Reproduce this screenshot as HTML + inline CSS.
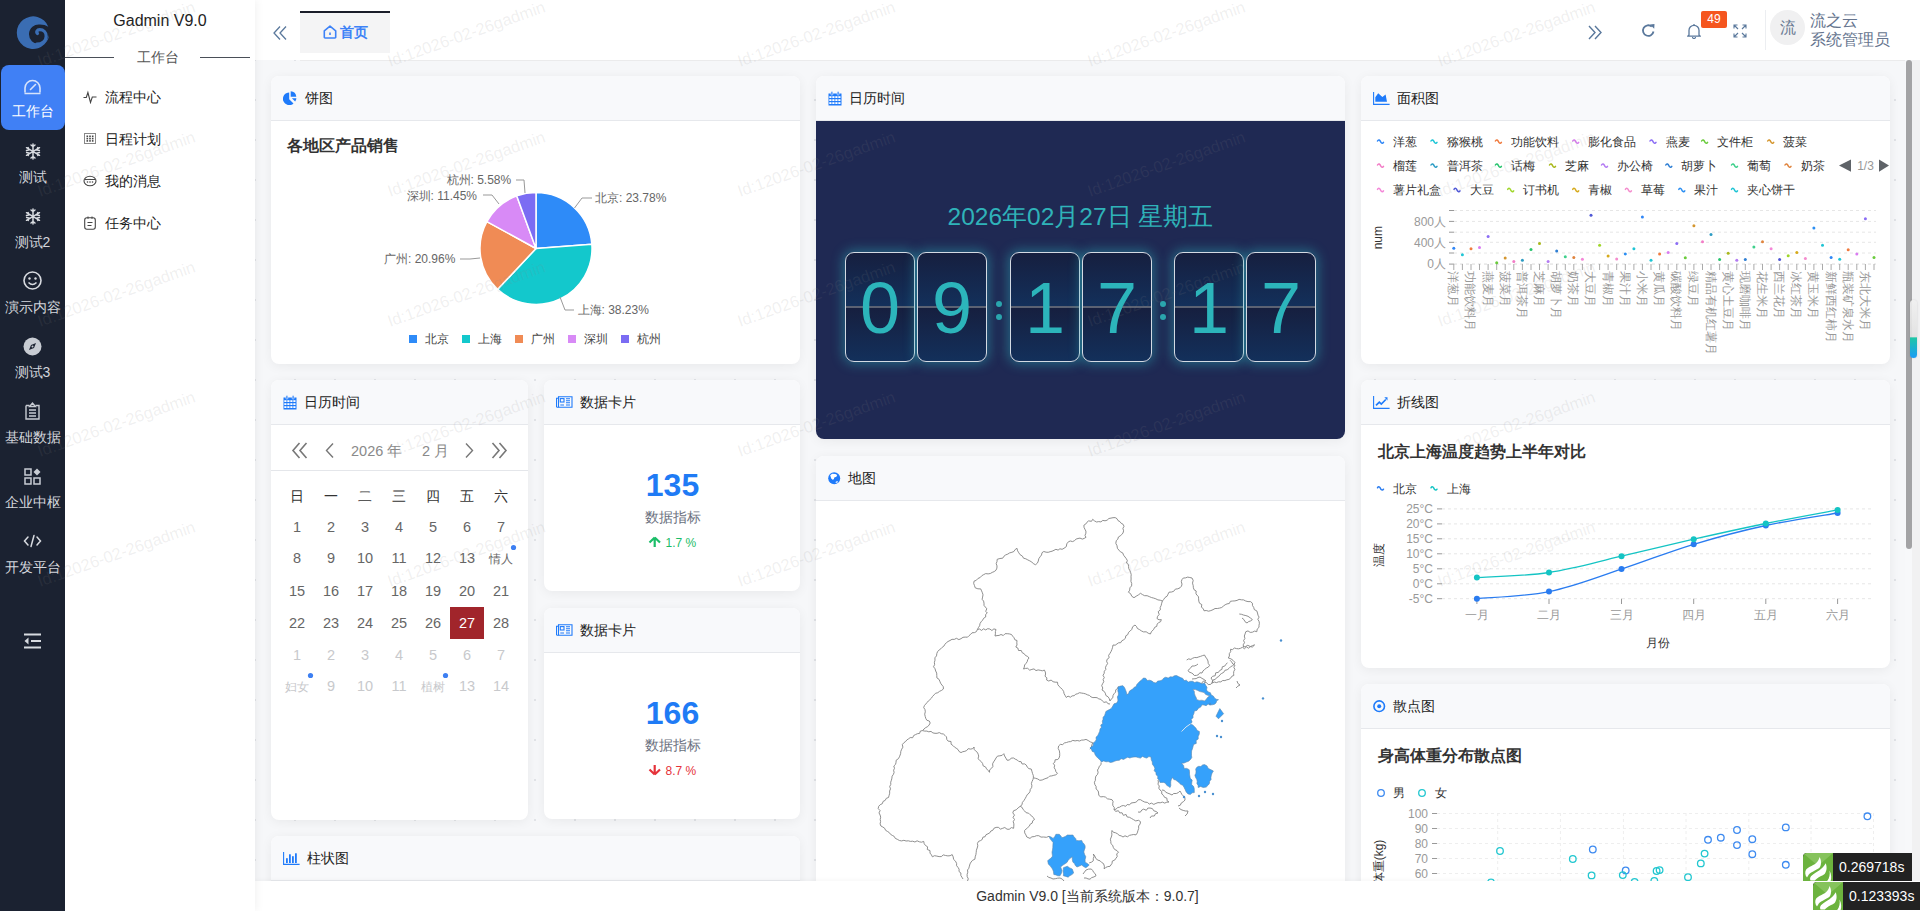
<!DOCTYPE html>
<html><head><meta charset="utf-8">
<style>
*{box-sizing:border-box;margin:0;padding:0}
html,body{width:1920px;height:911px;overflow:hidden;font-family:"Liberation Sans",sans-serif;background:#fff;color:#333}
.abs{position:absolute}
#side{left:0;top:0;width:65px;height:911px;background:#1b2231}
#sub{left:65px;top:0;width:190px;height:911px;background:#fff;box-shadow:2px 0 8px rgba(0,0,0,0.05);z-index:2}
#hdr{left:255px;top:0;width:1665px;height:60px;background:#fff;z-index:1}
#content{left:255px;top:60px;width:1665px;height:821px;background-color:#f6f7f9;
 background-image:radial-gradient(circle at 1px 1px,#e1e3e7 1px,transparent 1.2px);background-size:40px 40px;background-position:-1px -1px}
#foot{left:255px;top:881px;width:1665px;height:30px;background:#fff;font-size:14px;color:#333;text-align:center;line-height:30px;box-shadow:0 -1px 4px rgba(0,0,0,0.04)}
.card{position:absolute;background:#fff;border-radius:8px;box-shadow:0 2px 12px rgba(0,0,0,0.06);overflow:hidden}
.ch{position:absolute;left:0;top:0;right:0;height:45px;background:#f8f9fb;border-bottom:1px solid #e6e8ec;font-size:14px;color:#222;line-height:45px;padding-left:34px}
.ic{position:absolute}
.sl{left:0;width:65px;text-align:center;font-size:14px;line-height:16px;color:#d3d6dc;white-space:nowrap}
.mi{left:40px;font-size:14px;line-height:16px;color:#222;white-space:nowrap}
.fl{position:absolute;top:176px;width:70px;height:110px;border:1px solid #d3dae3;border-radius:9px;background:linear-gradient(180deg,#161f3f 0%,#13305b 49.5%,#5b6273 49.5%,#5b6273 50.5%,#161f3f 50.5%,#13305b 100%);box-shadow:0 0 12px 2px rgba(45,180,190,0.45);text-align:center;overflow:hidden}.fl span{display:block;font-size:72px;line-height:110px;color:#2cb5bb}
</style></head><body>
<div id="side" class="abs">
<svg class="abs" style="left:15px;top:16px" width="34" height="34" viewBox="0 0 34 34"><path fill="#3a6db3" fill-rule="evenodd" d="M33.3 10.8A16.3 16.3 0 1 0 33.5 22 L33.5 17 A9.8 9.8 0 1 1 25 8.5 Q30 8.5 33.3 10.8z"/><path d="M22.5 17.5c-1.6-1.4-.4-3.8 2.2-3.8 4 0 6.5 3 6.5 6.5 0 4.5-4 8-9.5 8" fill="none" stroke="#3a6db3" stroke-width="3.2" stroke-linecap="round"/></svg>
<div class="abs" style="left:1px;top:65px;width:64px;height:65px;background:#4080f5;border-radius:8px"></div>
<svg class="abs" style="left:23px;top:78px" width="19" height="17" viewBox="0 0 19 17"><path d="M2 14.5V10a7.5 7.5 0 0 1 15 0v4.5M1.5 15.5h16" fill="none" stroke="#d7e3fb" stroke-width="1.6"/><path d="M7.5 11.5l5-5" stroke="#d7e3fb" stroke-width="1.6" stroke-linecap="round"/></svg>
<div class="abs sl" style="top:103px;color:#fff">工作台</div>
<svg class="abs" style="left:25px;top:143px" width="16" height="17" viewBox="0 0 16 17"><g stroke="#d8dbe0" stroke-width="1.5" fill="none" stroke-linecap="round"><path d="M8 1v15M1.5 4.7l13 7.6M1.5 12.3l13-7.6M6 2l2 1.6L10 2M6 15l2-1.6 2 1.6M1.5 7.5l2.4-.6-.8-2.3M14.5 9.5l-2.4.6.8 2.3M1.6 9.6l2.4.5-.8 2.3M14.4 7.4l-2.4-.5.8-2.3"/></g></svg>
<div class="abs sl" style="top:169px">测试</div>
<svg class="abs" style="left:25px;top:208px" width="16" height="17" viewBox="0 0 16 17"><g stroke="#d8dbe0" stroke-width="1.5" fill="none" stroke-linecap="round"><path d="M8 1v15M1.5 4.7l13 7.6M1.5 12.3l13-7.6M6 2l2 1.6L10 2M6 15l2-1.6 2 1.6M1.5 7.5l2.4-.6-.8-2.3M14.5 9.5l-2.4.6.8 2.3M1.6 9.6l2.4.5-.8 2.3M14.4 7.4l-2.4-.5.8-2.3"/></g></svg>
<div class="abs sl" style="top:234px">测试2</div>
<svg class="abs" style="left:23px;top:271px" width="19" height="19" viewBox="0 0 19 19"><circle cx="9.5" cy="9.5" r="8.5" fill="none" stroke="#d8dbe0" stroke-width="1.6"/><circle cx="6.5" cy="7.5" r="1.2" fill="#d8dbe0"/><circle cx="12.5" cy="7.5" r="1.2" fill="#d8dbe0"/><path d="M5.5 11.5q4 4 8 0" fill="none" stroke="#d8dbe0" stroke-width="1.5"/></svg>
<div class="abs sl" style="top:299px">演示内容</div>
<svg class="abs" style="left:23px;top:337px" width="19" height="19" viewBox="0 0 19 19"><circle cx="9.5" cy="9.5" r="9" fill="#c8ccd3"/><path d="M13 6l-5 2-2 5 5-2z" fill="#1c2332"/><circle cx="9.5" cy="9.5" r="1" fill="#c8ccd3"/></svg>
<div class="abs sl" style="top:364px">测试3</div>
<svg class="abs" style="left:24px;top:402px" width="17" height="18" viewBox="0 0 17 18"><path d="M2 3.5h3.5M11.5 3.5H15v13.5H2V3.5" fill="none" stroke="#c8ccd3" stroke-width="1.4"/><path d="M5.5 4.5l3-3.5 3 3.5z" fill="none" stroke="#c8ccd3" stroke-width="1.3"/><path d="M5 8h7M5 11h7M5 14h7" stroke="#c8ccd3" stroke-width="1.3"/></svg>
<div class="abs sl" style="top:429px">基础数据</div>
<svg class="abs" style="left:24px;top:468px" width="17" height="17" viewBox="0 0 17 17"><g fill="none" stroke="#c8ccd3" stroke-width="1.5"><rect x="1" y="1" width="6" height="6"/><rect x="1" y="10" width="6" height="6"/><rect x="10" y="10" width="6" height="6"/></g><path d="M13 0.5l3.5 3.5-3.5 3.5-3.5-3.5z" fill="#c8ccd3"/></svg>
<div class="abs sl" style="top:494px">企业中枢</div>
<svg class="abs" style="left:23px;top:534px" width="19" height="14" viewBox="0 0 19 14"><g fill="none" stroke="#d8dbe0" stroke-width="1.5" stroke-linecap="round"><path d="M5 3L1.5 7 5 11M14 3l3.5 4-3.5 4M11 1.5L8 12.5"/></g></svg>
<div class="abs sl" style="top:559px">开发平台</div>
<svg class="abs" style="left:23px;top:633px" width="19" height="16" viewBox="0 0 19 16"><g stroke="#d8dbe0" stroke-width="2"><path d="M1 1.5h17M8 8h10M1 14.5h17"/></g><path d="M5.5 4.5L1.5 8l4 3.5z" fill="#d8dbe0"/></svg>
</div>
<div id="sub" class="abs">
<div class="abs" style="left:0;top:12px;width:190px;text-align:center;font-size:16px;line-height:18px;color:#222">Gadmin V9.0</div>
<div class="abs" style="left:0;top:57px;width:49px;height:1px;background:#4a4f58"></div>
<div class="abs" style="left:135px;top:57px;width:50px;height:1px;background:#4a4f58"></div>
<div class="abs" style="left:72px;top:49px;font-size:14px;line-height:16px;color:#555">工作台</div>
<svg class="abs" style="left:18px;top:90px" width="14" height="14" viewBox="0 0 14 14"><path d="M0.5 7.5h2.8l1.6-5 2.6 10 1.8-5.5h4.2" fill="none" stroke="#444" stroke-width="1.1"/></svg>
<div class="abs mi" style="top:89px">流程中心</div>
<svg class="abs" style="left:19px;top:133px" width="12" height="11" viewBox="0 0 12 11"><rect x=".5" y=".5" width="11" height="10" fill="none" stroke="#888" stroke-width="1"/><g fill="#444"><rect x="2.5" y="2.5" width="1.6" height="1.6"/><rect x="5.2" y="2.5" width="1.6" height="1.6"/><rect x="7.9" y="2.5" width="1.6" height="1.6"/><rect x="2.5" y="4.8" width="1.6" height="1.6"/><rect x="5.2" y="4.8" width="1.6" height="1.6"/><rect x="7.9" y="4.8" width="1.6" height="1.6"/><rect x="2.5" y="7.1" width="1.6" height="1.6"/><rect x="5.2" y="7.1" width="1.6" height="1.6"/><rect x="7.9" y="7.1" width="1.6" height="1.6"/></g></svg>
<div class="abs mi" style="top:131px">日程计划</div>
<svg class="abs" style="left:18px;top:175px" width="14" height="12" viewBox="0 0 14 12"><ellipse cx="7" cy="6" rx="6" ry="4.8" fill="none" stroke="#444" stroke-width="1.1"/><path d="M2 4.5h10" stroke="#444" stroke-width="1"/><circle cx="4.5" cy="7" r=".8" fill="#444"/><circle cx="7" cy="7" r=".8" fill="#444"/><circle cx="9.5" cy="7" r=".8" fill="#444"/></svg>
<div class="abs mi" style="top:173px">我的消息</div>
<svg class="abs" style="left:19px;top:216px" width="12" height="14" viewBox="0 0 12 14"><rect x=".7" y="1.7" width="10.6" height="11.6" rx="2.2" fill="none" stroke="#444" stroke-width="1.1"/><path d="M4 .5v2.4M8 .5v2.4M3.5 6.5h5M3.5 9.5h4" stroke="#444" stroke-width="1"/></svg>
<div class="abs mi" style="top:215px">任务中心</div>
</div>
<div id="hdr" class="abs">
<svg class="abs" style="left:18px;top:26px" width="14" height="14" viewBox="0 0 14 14"><path d="M7 0.5L1 7l6 6.5M13 0.5L7 7l6 6.5" fill="none" stroke="#5a789c" stroke-width="1.3"/></svg>
<div class="abs" style="left:45px;top:11px;width:90px;height:42px;background:#f4f4f5;border-top:2px solid #1a1d29"></div>
<svg class="abs" style="left:68px;top:25px" width="14" height="14" viewBox="0 0 14 14"><path d="M1.3 5.8L7 1.2l5.7 4.6v6.4a.8.8 0 0 1-.8.8H2.1a.8.8 0 0 1-.8-.8z" fill="none" stroke="#3d82f7" stroke-width="1.6" stroke-linejoin="round"/><path d="M7 7.5v2.5" stroke="#3d82f7" stroke-width="1.6"/></svg>
<div class="abs" style="left:85px;top:24px;font-size:14px;line-height:16px;color:#3d82f7;font-weight:bold">首页</div>
<svg class="abs" style="left:1333px;top:25px" width="14" height="15" viewBox="0 0 14 15"><path d="M1 1l6 6.5L1 14M7 1l6 6.5L7 14" fill="none" stroke="#5a789c" stroke-width="1.4"/></svg>
<svg class="abs" style="left:1386px;top:23px" width="15" height="15" viewBox="0 0 15 15"><path d="M12.5 8.5A5.3 5.3 0 1 1 10.8 3.6" fill="none" stroke="#5a789c" stroke-width="1.8"/><path d="M9 1.5l4.5-.5-.3 4.8z" fill="#5a789c"/></svg>
<svg class="abs" style="left:1432px;top:23px" width="14" height="16" viewBox="0 0 14 16"><path d="M2 12V7.3a5 5 0 0 1 10 0V12l1.3 1.2H0.7z" fill="none" stroke="#5a789c" stroke-width="1.3" stroke-linejoin="round"/><path d="M5.5 14a1.5 1.5 0 0 0 3 0M7 1v1.3" stroke="#5a789c" stroke-width="1.2" fill="none"/></svg>
<div class="abs" style="left:1446px;top:11px;width:26px;height:17px;background:#f5561f;border-radius:2px;color:#fff;font-size:12px;line-height:17px;text-align:center">49</div>
<svg class="abs" style="left:1478px;top:24px" width="14" height="14" viewBox="0 0 14 14"><g fill="none" stroke="#5a789c" stroke-width="1.1"><path d="M1 4.5V1h3.5M1 1l4 4M13 4.5V1H9.5M13 1L9 5M1 9.5V13h3.5M1 13l4-4M13 9.5V13H9.5M13 13L9 9"/></g></svg>
<div class="abs" style="left:1510px;top:10px;width:1px;height:40px;background:#eceef1"></div>
<div class="abs" style="left:1515px;top:10px;width:35px;height:35px;border-radius:50%;background:#f0f0f1;color:#6a7a93;font-size:16px;line-height:35px;text-align:center">流</div>
<div class="abs" style="left:1555px;top:11px;font-size:16px;line-height:19px;color:#65748e">流之云<br>系统管理员</div>
</div>
<div id="content" class="abs">
<div class="card" style="left:16px;top:16px;width:529px;height:288px"><div class="ch" style="padding-left:34px"><svg class="ic" style="left:12px;top:15px" width="15" height="14" viewBox="0 0 15 14"><path d="M6.2 1.5A6.3 6.3 0 1 0 10.5 12.4L6.2 8.2z" fill="#1f7bfa"/><path d="M7.7 0.3A6 6 0 0 1 13.3 5.7H7.7z" fill="#1f7bfa"/><path d="M8.9 7.2h4.5a6 6 0 0 1-1.3 3.3z" fill="#1f7bfa"/></svg>饼图</div><!--pie--></div>
<div class="card" style="left:16px;top:320px;width:257px;height:440px"><div class="ch" style="padding-left:33px"><svg class="ic" style="left:12px;top:15px" width="14" height="15" viewBox="0 0 14 15"><path d="M0.5 2.6h13v11.9h-13z" fill="#1f7bfa"/><rect x="3" y="0.6" width="1.8" height="3.6" rx=".9" fill="#1f7bfa" stroke="#f8f9fb" stroke-width=".6"/><rect x="9.2" y="0.6" width="1.8" height="3.6" rx=".9" fill="#1f7bfa" stroke="#f8f9fb" stroke-width=".6"/><g fill="#fff"><rect x="1.3" y="5.2" width="2.2" height="1.8"/><rect x="4.3" y="5.2" width="2.2" height="1.8"/><rect x="7.3" y="5.2" width="2.2" height="1.8"/><rect x="10.3" y="5.2" width="2.2" height="1.8"/><rect x="1.3" y="8.2" width="2.2" height="1.8"/><rect x="4.3" y="8.2" width="2.2" height="1.8"/><rect x="7.3" y="8.2" width="2.2" height="1.8"/><rect x="10.3" y="8.2" width="2.2" height="1.8"/><rect x="1.3" y="11.2" width="2.2" height="1.8"/><rect x="4.3" y="11.2" width="2.2" height="1.8"/><rect x="7.3" y="11.2" width="2.2" height="1.8"/><rect x="10.3" y="11.2" width="2.2" height="1.8"/></g></svg>日历时间</div><!--cal--></div>
<div class="card" style="left:289px;top:320px;width:256px;height:211px"><div class="ch" style="padding-left:36px"><svg class="ic" style="left:12px;top:16px" width="17" height="12" viewBox="0 0 17 12"><g fill="none" stroke="#1f7bfa" stroke-width="1.1"><path d="M2.5 0.8h13.5v10.4H1.3a.8.8 0 0 1-.8-.8V2.3h2z"/><path d="M2.5 0.8v10.4"/><rect x="4.3" y="2.6" width="3.7" height="3.4"/><path d="M10 2.8h4M10 4.8h4M10 6.8h4M4.3 9h3.7M10 9h4"/></g></svg>数据卡片</div><!--dc1--></div>
<div class="card" style="left:289px;top:548px;width:256px;height:211px"><div class="ch" style="padding-left:36px"><svg class="ic" style="left:12px;top:16px" width="17" height="12" viewBox="0 0 17 12"><g fill="none" stroke="#1f7bfa" stroke-width="1.1"><path d="M2.5 0.8h13.5v10.4H1.3a.8.8 0 0 1-.8-.8V2.3h2z"/><path d="M2.5 0.8v10.4"/><rect x="4.3" y="2.6" width="3.7" height="3.4"/><path d="M10 2.8h4M10 4.8h4M10 6.8h4M4.3 9h3.7M10 9h4"/></g></svg>数据卡片</div><!--dc2--></div>
<div class="card" style="left:16px;top:776px;width:529px;height:300px"><div class="ch" style="padding-left:36px"><svg class="ic" style="left:12px;top:16px" width="17" height="13" viewBox="0 0 17 13"><path d="M0.6 0v12.4h16" fill="none" stroke="#1f7bfa" stroke-width="1.1"/><g fill="#1f7bfa"><rect x="3" y="6.2" width="1.8" height="4.8"/><rect x="6" y="2.3" width="1.8" height="8.7"/><rect x="9" y="4.2" width="1.8" height="6.8"/><rect x="12" y="1.3" width="1.8" height="9.7"/></g></svg>柱状图</div></div>
<div class="card" style="left:561px;top:16px;width:529px;height:363px"><div class="ch" style="padding-left:33px"><svg class="ic" style="left:12px;top:15px" width="14" height="15" viewBox="0 0 14 15"><path d="M0.5 2.6h13v11.9h-13z" fill="#1f7bfa"/><rect x="3" y="0.6" width="1.8" height="3.6" rx=".9" fill="#1f7bfa" stroke="#f8f9fb" stroke-width=".6"/><rect x="9.2" y="0.6" width="1.8" height="3.6" rx=".9" fill="#1f7bfa" stroke="#f8f9fb" stroke-width=".6"/><g fill="#fff"><rect x="1.3" y="5.2" width="2.2" height="1.8"/><rect x="4.3" y="5.2" width="2.2" height="1.8"/><rect x="7.3" y="5.2" width="2.2" height="1.8"/><rect x="10.3" y="5.2" width="2.2" height="1.8"/><rect x="1.3" y="8.2" width="2.2" height="1.8"/><rect x="4.3" y="8.2" width="2.2" height="1.8"/><rect x="7.3" y="8.2" width="2.2" height="1.8"/><rect x="10.3" y="8.2" width="2.2" height="1.8"/><rect x="1.3" y="11.2" width="2.2" height="1.8"/><rect x="4.3" y="11.2" width="2.2" height="1.8"/><rect x="7.3" y="11.2" width="2.2" height="1.8"/><rect x="10.3" y="11.2" width="2.2" height="1.8"/></g></svg>日历时间</div><div class="abs" style="left:0;top:45px;width:529px;height:318px;background:#1f2953"></div><div class="abs" style="left:0;top:127px;width:529px;text-align:center;font-size:24.5px;line-height:28px;color:#2fb3b9">2026年02月27日 星期五</div><div class="fl" style="left:29px"><span>0</span></div><div class="fl" style="left:101px"><span>9</span></div><div class="fl" style="left:194px"><span>1</span></div><div class="fl" style="left:266px"><span>7</span></div><div class="fl" style="left:358px"><span>1</span></div><div class="fl" style="left:430px"><span>7</span></div><div class="abs" style="left:179.5px;top:225px;width:6px;height:6px;border-radius:50%;background:#2aa5ad"></div><div class="abs" style="left:179.5px;top:238px;width:6px;height:6px;border-radius:50%;background:#2aa5ad"></div><div class="abs" style="left:344px;top:225px;width:6px;height:6px;border-radius:50%;background:#2aa5ad"></div><div class="abs" style="left:344px;top:238px;width:6px;height:6px;border-radius:50%;background:#2aa5ad"></div></div>
<div class="card" style="left:561px;top:396px;width:529px;height:500px"><div class="ch" style="padding-left:32px"><svg class="ic" style="left:12px;top:16px" width="13" height="13" viewBox="0 0 13 13"><circle cx="6.2" cy="6.2" r="6" fill="#1f7bfa"/><path d="M2.2 3.3l2-1.6 3.2.3 1.8 1-.8 1.7-2.1.7-.5 1.8-1.2.6-1.4-1.4z" fill="#fff"/><path d="M7.2 10.2l1.6-1 1.2.1-.9 1.6z" fill="#fff"/></svg>地图</div><!--map--></div>
<div class="card" style="left:1106px;top:16px;width:529px;height:288px"><div class="ch" style="padding-left:36px"><svg class="ic" style="left:12px;top:16px" width="17" height="13" viewBox="0 0 17 13"><path d="M0.6 0v12.4h16" fill="none" stroke="#1f7bfa" stroke-width="1.1"/><path d="M2.3 5.2L5.2 1.2l4.2 3.8 3.2-2.5L14 9.8H2.3z" fill="#1f7bfa"/></svg>面积图</div><!--area--></div>
<div class="card" style="left:1106px;top:320px;width:529px;height:288px"><div class="ch" style="padding-left:36px"><svg class="ic" style="left:12px;top:16px" width="17" height="13" viewBox="0 0 17 13"><path d="M0.6 0v12.4h16" fill="none" stroke="#1f7bfa" stroke-width="1.1"/><path d="M3 9.3l3.3-3.2 2 2 4.5-4.6" fill="none" stroke="#1f7bfa" stroke-width="1.7"/><path d="M11.3 1.2h3.2v3.2z" fill="#1f7bfa"/></svg>折线图</div><!--line--></div>
<div class="card" style="left:1106px;top:624px;width:529px;height:400px"><div class="ch" style="padding-left:32px"><svg class="ic" style="left:12px;top:16px" width="13" height="13" viewBox="0 0 13 13"><circle cx="6.2" cy="6.2" r="5.3" fill="none" stroke="#1f7bfa" stroke-width="1.6"/><circle cx="6.2" cy="6.2" r="2" fill="#1f7bfa"/></svg>散点图</div><!--scatter--></div>
</div>
<div class="abs" style="left:255px;top:60px;width:1665px;height:821px;overflow:hidden;z-index:1;pointer-events:none"><svg width="1665" height="821" font-family="Liberation Sans, sans-serif" style="position:absolute;left:0;top:0"><g transform="translate(-255,-60)"><path d="M536,248.5L536.00,192.50A56,56 0 0 1 591.84,244.21Z" fill="#2e8bf8" stroke="#fff" stroke-width="1.5" stroke-linejoin="round"/>
<path d="M536,248.5L591.84,244.21A56,56 0 0 1 497.64,289.30Z" fill="#13c8cc" stroke="#fff" stroke-width="1.5" stroke-linejoin="round"/>
<path d="M536,248.5L497.64,289.30A56,56 0 0 1 486.88,221.61Z" fill="#f08b55" stroke="#fff" stroke-width="1.5" stroke-linejoin="round"/>
<path d="M536,248.5L486.88,221.61A56,56 0 0 1 516.77,195.91Z" fill="#d88af6" stroke="#fff" stroke-width="1.5" stroke-linejoin="round"/>
<path d="M536,248.5L516.77,195.91A56,56 0 0 1 536.00,192.50Z" fill="#7b6cf3" stroke="#fff" stroke-width="1.5" stroke-linejoin="round"/>
<path d="M574.5,208 L582,198 L592,198" fill="none" stroke="#999" stroke-width="1"/>
<path d="M560,297 L565,310 L574,310" fill="none" stroke="#999" stroke-width="1"/>
<path d="M480,258 L470,259 L460,259" fill="none" stroke="#999" stroke-width="1"/>
<path d="M499,204 L492,195 L483,195" fill="none" stroke="#999" stroke-width="1"/>
<path d="M525,193 L524,180 L516,180" fill="none" stroke="#999" stroke-width="1"/>
<text x="595" y="202" font-size="12" fill="#666" text-anchor="start" font-weight="normal" >北京: 23.78%</text>
<text x="577.5" y="314" font-size="12" fill="#666" text-anchor="start" font-weight="normal" >上海: 38.23%</text>
<text x="384" y="263" font-size="12" fill="#666" text-anchor="start" font-weight="normal" >广州: 20.96%</text>
<text x="406.5" y="200" font-size="12" fill="#666" text-anchor="start" font-weight="normal" >深圳: 11.45%</text>
<text x="446.5" y="184" font-size="12" fill="#666" text-anchor="start" font-weight="normal" >杭州: 5.58%</text>
<text x="287" y="151" font-size="16" fill="#333" text-anchor="start" font-weight="bold" >各地区产品销售</text>
<rect x="409" y="335" width="8" height="8" fill="#2e8bf8"/>
<text x="425" y="343" font-size="12" fill="#444" text-anchor="start" font-weight="normal" >北京</text>
<rect x="462" y="335" width="8" height="8" fill="#13c8cc"/>
<text x="478" y="343" font-size="12" fill="#444" text-anchor="start" font-weight="normal" >上海</text>
<rect x="515" y="335" width="8" height="8" fill="#f08b55"/>
<text x="531" y="343" font-size="12" fill="#444" text-anchor="start" font-weight="normal" >广州</text>
<rect x="568" y="335" width="8" height="8" fill="#d88af6"/>
<text x="584" y="343" font-size="12" fill="#444" text-anchor="start" font-weight="normal" >深圳</text>
<rect x="621" y="335" width="8" height="8" fill="#7b6cf3"/>
<text x="637" y="343" font-size="12" fill="#444" text-anchor="start" font-weight="normal" >杭州</text>
<path d="M299.5,443 L293,450.5 L299.5,458 M306.5,443 L300,450.5 L306.5,458" fill="none" stroke="#777" stroke-width="1.6"/>
<path d="M333,443.5 L326.5,450.5 L333,457.5" fill="none" stroke="#777" stroke-width="1.4"/>
<path d="M466,443.5 L472.5,450.5 L466,457.5" fill="none" stroke="#777" stroke-width="1.4"/>
<path d="M492.5,443 L499,450.5 L492.5,458 M499.5,443 L506,450.5 L499.5,458" fill="none" stroke="#777" stroke-width="1.6"/>
<text x="351" y="455.5" font-size="14.5" fill="#8a8a8a" text-anchor="start" font-weight="normal" >2026 年</text>
<text x="422" y="455.5" font-size="14.5" fill="#8a8a8a" text-anchor="start" font-weight="normal" >2 月</text>
<rect x="271" y="470" width="257" height="1" fill="#e4e6ea"/>
<text x="297" y="500.5" font-size="14" fill="#333" text-anchor="middle" font-weight="normal" >日</text>
<text x="331" y="500.5" font-size="14" fill="#333" text-anchor="middle" font-weight="normal" >一</text>
<text x="365" y="500.5" font-size="14" fill="#333" text-anchor="middle" font-weight="normal" >二</text>
<text x="399" y="500.5" font-size="14" fill="#333" text-anchor="middle" font-weight="normal" >三</text>
<text x="433" y="500.5" font-size="14" fill="#333" text-anchor="middle" font-weight="normal" >四</text>
<text x="467" y="500.5" font-size="14" fill="#333" text-anchor="middle" font-weight="normal" >五</text>
<text x="501" y="500.5" font-size="14" fill="#333" text-anchor="middle" font-weight="normal" >六</text>
<text x="297" y="531.6" font-size="14.5" fill="#666" text-anchor="middle" font-weight="normal" >1</text>
<text x="331" y="531.6" font-size="14.5" fill="#666" text-anchor="middle" font-weight="normal" >2</text>
<text x="365" y="531.6" font-size="14.5" fill="#666" text-anchor="middle" font-weight="normal" >3</text>
<text x="399" y="531.6" font-size="14.5" fill="#666" text-anchor="middle" font-weight="normal" >4</text>
<text x="433" y="531.6" font-size="14.5" fill="#666" text-anchor="middle" font-weight="normal" >5</text>
<text x="467" y="531.6" font-size="14.5" fill="#666" text-anchor="middle" font-weight="normal" >6</text>
<text x="501" y="531.6" font-size="14.5" fill="#666" text-anchor="middle" font-weight="normal" >7</text>
<text x="297" y="563.4" font-size="14.5" fill="#666" text-anchor="middle" font-weight="normal" >8</text>
<text x="331" y="563.4" font-size="14.5" fill="#666" text-anchor="middle" font-weight="normal" >9</text>
<text x="365" y="563.4" font-size="14.5" fill="#666" text-anchor="middle" font-weight="normal" >10</text>
<text x="399" y="563.4" font-size="14.5" fill="#666" text-anchor="middle" font-weight="normal" >11</text>
<text x="433" y="563.4" font-size="14.5" fill="#666" text-anchor="middle" font-weight="normal" >12</text>
<text x="467" y="563.4" font-size="14.5" fill="#666" text-anchor="middle" font-weight="normal" >13</text>
<text x="501" y="562.9" font-size="12" fill="#666" text-anchor="middle" font-weight="normal" >情人</text>
<text x="297" y="595.5" font-size="14.5" fill="#666" text-anchor="middle" font-weight="normal" >15</text>
<text x="331" y="595.5" font-size="14.5" fill="#666" text-anchor="middle" font-weight="normal" >16</text>
<text x="365" y="595.5" font-size="14.5" fill="#666" text-anchor="middle" font-weight="normal" >17</text>
<text x="399" y="595.5" font-size="14.5" fill="#666" text-anchor="middle" font-weight="normal" >18</text>
<text x="433" y="595.5" font-size="14.5" fill="#666" text-anchor="middle" font-weight="normal" >19</text>
<text x="467" y="595.5" font-size="14.5" fill="#666" text-anchor="middle" font-weight="normal" >20</text>
<text x="501" y="595.5" font-size="14.5" fill="#666" text-anchor="middle" font-weight="normal" >21</text>
<text x="297" y="627.5" font-size="14.5" fill="#666" text-anchor="middle" font-weight="normal" >22</text>
<text x="331" y="627.5" font-size="14.5" fill="#666" text-anchor="middle" font-weight="normal" >23</text>
<text x="365" y="627.5" font-size="14.5" fill="#666" text-anchor="middle" font-weight="normal" >24</text>
<text x="399" y="627.5" font-size="14.5" fill="#666" text-anchor="middle" font-weight="normal" >25</text>
<text x="433" y="627.5" font-size="14.5" fill="#666" text-anchor="middle" font-weight="normal" >26</text>
<rect x="450" y="607" width="34" height="32" fill="#a1252b"/>
<text x="467" y="627.5" font-size="14.5" fill="#fff" text-anchor="middle" font-weight="normal" >27</text>
<text x="501" y="627.5" font-size="14.5" fill="#666" text-anchor="middle" font-weight="normal" >28</text>
<text x="297" y="659.5" font-size="14.5" fill="#c8c9cc" text-anchor="middle" font-weight="normal" >1</text>
<text x="331" y="659.5" font-size="14.5" fill="#c8c9cc" text-anchor="middle" font-weight="normal" >2</text>
<text x="365" y="659.5" font-size="14.5" fill="#c8c9cc" text-anchor="middle" font-weight="normal" >3</text>
<text x="399" y="659.5" font-size="14.5" fill="#c8c9cc" text-anchor="middle" font-weight="normal" >4</text>
<text x="433" y="659.5" font-size="14.5" fill="#c8c9cc" text-anchor="middle" font-weight="normal" >5</text>
<text x="467" y="659.5" font-size="14.5" fill="#c8c9cc" text-anchor="middle" font-weight="normal" >6</text>
<text x="501" y="659.5" font-size="14.5" fill="#c8c9cc" text-anchor="middle" font-weight="normal" >7</text>
<text x="297" y="690.8" font-size="12" fill="#c8c9cc" text-anchor="middle" font-weight="normal" >妇女</text>
<text x="331" y="691.3" font-size="14.5" fill="#c8c9cc" text-anchor="middle" font-weight="normal" >9</text>
<text x="365" y="691.3" font-size="14.5" fill="#c8c9cc" text-anchor="middle" font-weight="normal" >10</text>
<text x="399" y="691.3" font-size="14.5" fill="#c8c9cc" text-anchor="middle" font-weight="normal" >11</text>
<text x="433" y="690.8" font-size="12" fill="#c8c9cc" text-anchor="middle" font-weight="normal" >植树</text>
<text x="467" y="691.3" font-size="14.5" fill="#c8c9cc" text-anchor="middle" font-weight="normal" >13</text>
<text x="501" y="691.3" font-size="14.5" fill="#c8c9cc" text-anchor="middle" font-weight="normal" >14</text>
<circle cx="513.5" cy="547.5" r="2.6" fill="#3d7ff2"/>
<circle cx="310.5" cy="675.5" r="2.6" fill="#3d7ff2"/>
<circle cx="445.5" cy="675.5" r="2.6" fill="#3d7ff2"/>
<text x="672.5" y="496" font-size="32" fill="#1f7bf5" text-anchor="middle" font-weight="bold" >135</text>
<text x="672.5" y="521.5" font-size="14" fill="#6b7180" text-anchor="middle" font-weight="normal" >数据指标</text>
<path d="M654.7,537.5 L649.5,542.5 M654.7,537.5 L660,542.5 M654.7,538 L654.7,547" stroke="#1bbd68" stroke-width="2.2" fill="none"/>
<text x="665.5" y="546.5" font-size="12" fill="#1bbd68" text-anchor="start" font-weight="normal" >1.7 %</text>
<text x="672.5" y="724" font-size="32" fill="#1f7bf5" text-anchor="middle" font-weight="bold" >166</text>
<text x="672.5" y="749.5" font-size="14" fill="#6b7180" text-anchor="middle" font-weight="normal" >数据指标</text>
<path d="M654.7,774.5 L649.5,769.5 M654.7,774.5 L660,769.5 M654.7,774 L654.7,765" stroke="#e5323a" stroke-width="2.2" fill="none"/>
<text x="665.5" y="774.5" font-size="12" fill="#e5323a" text-anchor="start" font-weight="normal" >8.7 %</text>
<path d="M963.0,879.0 L961.9,877.2 L960.8,875.4 L960.9,873.0 L959.0,871.5 L959.1,869.2 L958.0,867.4 L956.6,865.7 L956.6,863.4 L955.5,861.2 L953.6,859.4 L953.2,856.9 L952.2,854.6 L950.1,855.7 L947.9,855.9 L945.6,855.5 L943.3,854.9 L941.3,856.6 L939.1,856.6 L936.8,856.1 L934.5,855.7 L932.4,856.8 L931.4,854.8 L930.0,853.1 L930.0,850.6 L927.3,849.5 L927.6,846.8 L925.5,845.5 L924.2,843.7 L923.7,841.4 L921.5,842.2 L919.3,841.8 L917.1,840.8 L914.9,842.0 L912.7,841.2 L910.5,841.4 L908.3,840.8 L906.1,841.0 L903.9,840.3 L901.6,840.9 L899.4,840.5 L897.3,839.3 L895.3,838.4 L894.2,836.4 L892.3,835.4 L890.5,834.3 L889.2,832.5 L887.4,831.4 L885.6,830.3 L884.6,828.2 L882.8,827.0 L880.9,826.0 L880.1,823.9 L880.6,821.6 L880.2,819.4 L880.7,817.2 L880.1,815.0 L879.0,812.9 L880.1,810.6 L878.2,808.6 L878.7,806.3 L880.2,804.7 L882.3,803.7 L883.1,801.4 L885.2,800.4 L886.3,798.3 L888.5,797.5 L889.1,795.4 L889.7,793.2 L889.6,791.0 L890.5,788.9 L889.7,786.5 L890.8,784.4 L890.7,782.2 L891.4,780.2 L891.9,778.2 L892.1,776.2 L893.4,774.4 L894.1,772.4 L893.6,770.2 L894.5,768.3 L893.8,766.0 L895.6,764.3 L896.0,762.3 L896.2,760.2 L898.5,758.6 L899.7,756.2 L900.6,753.7 L900.8,751.4 L901.7,749.2 L902.9,747.2 L902.3,744.6 L903.9,742.7 L905.6,741.5 L906.9,739.9 L908.6,738.8 L910.2,737.6 L912.7,737.7 L913.7,735.5 L915.5,734.6 L917.4,733.7 L919.6,733.4 L920.4,731.0 L922.6,730.6 L924.0,729.0 L925.7,727.6 L927.7,726.6 L929.1,725.0 L930.2,723.0 L929.3,721.0 L926.9,720.3 L925.8,718.5 L925.2,716.4 L924.7,714.2 L925.3,711.8 L925.0,709.6 L923.7,707.6 L924.4,705.6 L925.7,704.1 L927.0,702.6 L928.3,701.0 L929.9,699.7 L931.3,698.3 L932.4,696.6 L934.0,694.9 L935.5,693.3 L937.8,692.7 L939.6,691.3 L941.6,690.4 L943.4,689.0 L943.3,686.7 L941.9,685.0 L940.6,683.2 L939.8,681.2 L939.0,679.3 L936.9,677.9 L936.8,675.6 L936.7,673.1 L935.7,671.0 L935.0,668.7 L933.5,666.8 L934.6,664.7 L934.4,662.3 L935.0,660.2 L934.9,657.8 L936.5,655.9 L936.8,653.6 L937.6,651.5 L939.1,650.1 L940.8,648.8 L942.2,647.3 L943.9,646.1 L945.0,644.2 L946.4,642.7 L948.0,641.5 L950.0,640.5 L952.0,639.3 L954.3,639.4 L956.4,638.3 L958.9,639.6 L961.0,638.7 L963.0,637.3 L965.2,637.1 L967.5,637.2 L969.0,635.7 L970.6,634.4 L972.0,632.8 L974.5,632.6 L976.4,631.6 L977.4,629.5 L978.4,627.6 L979.6,625.8 L980.0,623.6 L981.1,621.8 L982.6,620.2 L983.6,618.3 L985.7,617.0 L985.6,614.5 L987.3,613.0 L985.7,611.3 L986.8,608.8 L985.4,607.1 L984.0,605.4 L984.0,603.2 L983.6,601.1 L982.1,599.3 L982.6,597.1 L983.0,594.8 L982.4,592.8 L981.6,590.9 L980.7,588.9 L977.9,588.8 L975.2,587.8 L974.5,585.6 L973.7,583.5 L974.0,581.2 L976.3,580.3 L977.9,578.5 L980.2,577.5 L981.8,575.7 L983.7,574.6 L985.7,573.6 L988.1,573.9 L990.3,573.5 L992.2,572.4 L994.2,571.6 L996.0,570.2 L996.9,568.1 L997.0,565.9 L996.2,563.6 L997.0,561.5 L997.2,559.3 L999.9,558.5 L1002.7,558.2 L1004.0,556.2 L1005.7,554.9 L1007.8,554.1 L1009.6,552.9 L1011.9,552.3 L1013.9,551.5 L1015.2,549.5 L1017.0,548.3 L1017.6,550.8 L1018.8,552.8 L1020.1,554.7 L1022.4,556.1 L1023.5,558.2 L1025.8,558.8 L1027.8,559.9 L1029.8,560.9 L1031.8,562.0 L1033.5,563.8 L1035.6,564.7 L1037.4,563.1 L1038.3,561.0 L1038.8,558.7 L1040.1,556.8 L1041.5,555.0 L1042.0,552.7 L1043.8,551.5 L1046.1,552.2 L1048.2,552.3 L1050.1,551.7 L1052.1,551.2 L1054.0,550.3 L1055.9,549.3 L1058.1,550.1 L1059.9,548.8 L1062.1,549.3 L1064.0,548.3 L1066.3,546.6 L1066.8,543.8 L1068.5,541.7 L1070.4,541.0 L1072.6,541.6 L1074.4,540.7 L1076.1,539.1 L1078.0,538.5 L1080.0,538.1 L1082.3,539.1 L1084.2,538.4 L1086.0,537.3 L1085.0,535.4 L1085.9,533.2 L1085.9,531.1 L1084.9,529.2 L1084.0,527.3 L1083.9,525.2 L1085.7,524.1 L1087.0,522.2 L1088.6,520.9 L1091.5,521.3 L1092.7,519.3 L1094.5,520.9 L1096.6,522.0 L1098.7,521.6 L1100.9,521.9 L1102.8,520.4 L1105.0,520.8 L1107.1,520.2 L1108.9,518.5 L1111.0,518.1 L1113.0,517.7 L1115.2,517.6 L1117.0,518.7 L1118.0,520.6 L1119.9,521.6 L1121.2,523.3 L1123.1,524.3 L1124.0,526.3 L1122.9,528.4 L1123.6,530.8 L1123.0,533.0 L1121.7,534.6 L1120.2,535.9 L1118.4,537.0 L1117.8,539.2 L1116.3,540.6 L1115.8,543.3 L1117.0,545.7 L1117.4,548.3 L1118.9,550.1 L1120.4,551.8 L1122.7,552.9 L1123.6,555.2 L1125.0,557.0 L1126.3,558.7 L1127.3,560.5 L1126.5,563.0 L1128.4,564.5 L1128.5,566.6 L1128.8,568.7 L1129.8,570.5 L1130.6,572.4 L1131.2,574.6 L1131.0,576.8 L1131.1,579.0 L1130.9,581.3 L1131.7,583.4 L1131.6,585.9 L1129.9,587.8 L1129.7,590.2 L1128.4,592.2 L1130.6,593.7 L1131.8,596.3 L1134.0,597.7 L1136.2,596.2 L1138.4,594.9 L1140.5,593.3 L1142.5,594.6 L1144.6,595.7 L1147.1,595.7 L1149.3,596.6 L1151.4,597.5 L1153.7,598.1 L1155.8,598.8 L1157.9,599.9 L1160.2,600.2 L1162.4,601.0 L1163.8,599.3 L1165.0,597.5 L1167.1,596.2 L1168.0,594.2 L1169.0,592.2 L1171.5,592.0 L1173.7,591.3 L1175.4,589.1 L1177.8,588.8 L1180.0,587.8 L1181.5,586.1 L1182.0,584.1 L1181.3,581.7 L1181.9,579.7 L1183.3,578.0 L1185.5,577.9 L1187.7,577.1 L1189.8,577.5 L1192.0,578.0 L1193.2,580.4 L1192.5,583.1 L1193.2,585.6 L1193.4,587.7 L1194.0,589.7 L1196.2,591.0 L1195.9,593.3 L1196.8,595.1 L1198.5,596.6 L1198.6,598.8 L1198.8,601.1 L1199.5,603.2 L1201.8,604.6 L1201.4,607.2 L1203.3,608.7 L1204.0,610.8 L1206.2,610.5 L1208.6,611.2 L1210.8,610.6 L1213.0,609.7 L1215.0,608.5 L1217.3,608.5 L1219.5,608.1 L1221.7,607.5 L1223.4,606.1 L1225.1,604.8 L1227.0,603.9 L1229.3,603.5 L1230.4,601.3 L1232.7,601.0 L1234.9,600.9 L1237.0,600.4 L1239.1,599.4 L1241.4,599.8 L1243.6,599.9 L1245.7,601.0 L1248.0,601.6 L1250.5,601.6 L1252.4,603.2 L1252.5,605.6 L1253.7,607.4 L1254.3,609.6 L1256.8,610.9 L1257.5,613.0 L1258.0,615.2 L1259.1,617.1 L1257.8,619.3 L1259.0,621.2 L1259.4,623.2 L1259.0,625.3 L1259.0,627.3 L1257.2,629.1 L1256.8,631.7 L1254.6,631.1 L1252.4,632.2 L1250.2,632.4 L1248.0,630.9 L1245.8,631.7 L1245.1,633.9 L1244.3,636.0 L1244.9,638.5 L1243.6,640.5 L1244.5,642.7 L1243.2,644.8 L1243.6,647.0 L1245.8,646.4 L1247.8,645.3 L1250.4,646.6 L1252.5,645.6 L1254.6,644.9 L1252.4,647.0 L1250.3,646.6 L1248.5,648.2 L1246.4,646.9 L1244.5,648.7 L1242.4,647.3 L1240.5,648.3 L1238.5,648.8 L1236.5,648.6 L1234.4,648.0 L1232.5,649.6 L1230.5,649.3 L1230.7,651.7 L1229.3,653.6 L1229.4,656.0 L1228.3,658.0 L1230.9,658.8 L1233.1,660.4 L1234.9,662.4 L1234.1,664.5 L1232.4,665.8 L1230.5,666.8 L1229.0,668.4 L1227.2,669.8 L1224.9,670.3 L1223.7,672.4 L1221.7,673.4 L1220.0,674.7 L1218.6,676.6 L1216.7,677.6 L1215.3,679.4 L1213.0,680.0 L1212.3,682.4 L1210.7,684.4 L1208.2,684.6 L1206.4,682.5 L1204.0,682.2" fill="none" stroke="#828282" stroke-width="0.9"/>
<path d="M977.4,629.5 L979.5,629.0 L981.5,630.4 L983.6,628.8 L985.7,629.9 L987.7,628.7 L989.8,629.0 L991.9,630.5 L993.9,628.9 L996.0,629.5 L995.4,631.6 L995.4,633.8 L995.0,636.0 L997.0,635.6 L999.1,635.4 L1001.0,634.5 L1003.3,635.5 L1005.1,633.7 L1007.2,633.7 L1009.3,633.9 L1011.5,634.5 L1012.7,636.2 L1014.0,637.7 L1014.9,639.8 L1017.0,640.5 L1016.8,642.7 L1017.0,645.0 L1015.8,647.0 L1017.8,648.0 L1018.5,650.5 L1021.3,650.5 L1022.2,652.7 L1024.2,653.7 L1025.5,655.5 L1027.6,656.4 L1029.0,658.0 L1027.7,659.7 L1027.2,661.7 L1026.0,663.4 L1024.6,665.0 L1024.3,667.1 L1023.5,669.0 L1025.6,668.4 L1027.7,668.3 L1029.7,670.2 L1031.9,669.4 L1034.0,668.9 L1036.0,670.6 L1038.1,669.9 L1040.2,670.3 L1042.3,670.8 L1044.4,670.1 L1045.3,672.0 L1045.6,674.0 L1045.0,676.2 L1046.9,677.9 L1046.6,680.0 L1048.7,681.0 L1051.1,680.1 L1053.1,681.7 L1055.2,682.2 L1057.5,682.2 L1057.8,684.6 L1059.1,686.4 L1060.8,687.9 L1062.4,689.5 L1063.6,691.4 L1064.1,693.7 L1065.2,695.6 L1066.3,697.5 L1068.0,696.1 L1070.4,697.2 L1072.1,695.9 L1074.1,695.7 L1075.8,694.2 L1077.7,693.7 L1079.5,692.7 L1081.7,693.1 L1083.7,693.4 L1085.6,693.9 L1087.4,694.8 L1089.4,695.4 L1091.0,696.9 L1092.9,697.6 L1095.0,697.5 L1097.1,697.7 L1098.8,698.9 L1100.9,699.3 L1102.4,701.0 L1104.0,702.4 L1106.5,701.8 L1107.9,703.7 L1110.0,704.0" fill="none" stroke="#828282" stroke-width="0.9"/>
<path d="M1162.4,601.0 L1161.7,603.2 L1161.2,605.4 L1160.2,607.5 L1160.3,609.9 L1158.2,611.7 L1159.2,614.4 L1157.6,616.3 L1157.0,618.5 L1159.0,619.8 L1161.3,619.6 L1160.6,621.7 L1158.6,622.6 L1157.2,624.1 L1156.7,626.4 L1154.7,627.3 L1153.5,629.7 L1151.5,631.5 L1150.4,634.0 L1148.2,633.2 L1146.2,631.8 L1143.5,631.9 L1141.4,630.9 L1139.4,629.5 L1137.4,628.5 L1136.5,626.5 L1135.0,625.0 L1132.7,626.7 L1131.7,629.5 L1130.2,631.0 L1128.5,632.4 L1127.8,634.6 L1125.8,635.8 L1125.4,638.3 L1123.8,639.7 L1121.8,640.8 L1120.7,642.7 L1118.6,642.8 L1116.9,644.0 L1115.2,645.2 L1113.0,645.0 L1112.6,647.3 L1111.9,649.5 L1111.0,651.6 L1109.8,653.6 L1108.6,655.4 L1109.2,657.7 L1107.2,659.2 L1106.6,661.2 L1107.6,663.6 L1106.4,665.4 L1105.5,667.3 L1105.8,669.5 L1104.3,671.2 L1104.2,673.3 L1103.0,675.3 L1104.3,677.6 L1103.1,679.5 L1103.8,681.7 L1102.6,683.7 L1101.7,685.7 L1102.8,688.0 L1102.0,690.0 L1104.1,691.3 L1105.3,693.2 L1105.9,695.5 L1108.1,696.8 L1109.3,698.7 L1110.0,701.0 L1111.1,699.2 L1112.8,697.8 L1113.0,695.5 L1114.1,693.7 L1115.6,692.1 L1115.7,689.8 L1117.6,688.5 L1118.5,686.6" fill="none" stroke="#828282" stroke-width="0.9"/>
<path d="M922.6,730.6 L924.7,731.1 L926.8,731.1 L928.8,731.8 L931.0,731.4 L932.9,732.9 L935.0,733.3 L937.1,733.3 L939.3,732.6 L941.3,733.7 L943.4,734.0 L945.0,735.4 L946.5,736.9 L946.8,739.5 L948.1,741.1 L951.0,741.5 L951.1,744.2 L952.9,745.5 L954.4,747.0 L956.2,748.2 L958.0,749.5 L959.1,751.5 L961.0,752.6 L962.8,751.7 L964.9,751.3 L966.7,750.5 L968.2,748.7 L970.6,749.1 L972.6,748.7 L974.1,747.0 L974.0,749.2 L975.5,750.9 L977.3,752.3 L978.2,754.2 L978.7,756.1 L978.0,758.7 L979.6,760.2 L981.3,761.7 L982.6,763.5 L983.2,765.9 L985.5,766.9 L986.6,768.9 L988.2,770.5 L989.5,772.3 L989.6,769.9 L991.5,768.3 L992.9,766.5 L992.6,763.8 L993.6,761.9 L994.9,760.0 L996.0,758.0 L997.5,756.1 L999.9,755.8 L1002.2,755.3 L1003.8,753.7 L1004.6,756.0 L1005.9,758.1 L1007.0,760.2 L1009.4,760.1 L1011.2,758.1 L1013.6,758.0 L1015.3,759.2 L1017.3,760.0 L1018.8,761.5 L1021.1,761.7 L1022.1,764.0 L1024.6,763.9 L1026.3,765.1 L1027.4,767.3 L1029.0,768.7 L1031.2,769.0 L1031.9,771.2 L1032.5,773.4 L1033.3,775.5 L1033.4,777.8" fill="none" stroke="#828282" stroke-width="0.9"/>
<path d="M1033.4,777.8 L1035.6,778.3 L1037.8,779.0 L1039.8,780.3 L1042.2,780.0 L1044.1,779.1 L1046.0,778.4 L1048.0,777.7 L1049.6,776.1 L1051.8,775.9 L1053.8,775.3 L1055.8,774.8 L1057.5,773.4 L1055.9,771.7 L1055.4,769.6 L1054.2,767.8 L1054.6,765.2 L1053.2,763.5 L1054.8,762.2 L1055.1,759.8 L1057.8,759.5 L1059.1,757.9 L1059.7,755.8 L1059.7,753.3 L1059.4,750.9 L1058.2,748.5 L1058.6,746.0 L1060.3,744.4 L1062.7,744.6 L1064.3,743.0 L1066.5,742.5 L1068.5,741.8 L1070.7,741.6 L1072.8,740.4 L1075.1,740.9 L1077.2,740.5 L1079.5,741.0 L1081.6,740.1 L1083.9,740.0 L1086.0,739.4 L1088.2,740.5 L1090.3,741.9 L1092.7,742.7 L1091.9,744.9 L1091.3,747.3 L1090.0,749.3" fill="none" stroke="#828282" stroke-width="0.9"/>
<path d="M1033.4,777.8 L1032.9,779.7 L1032.0,781.6 L1031.4,783.5 L1031.9,785.7 L1031.6,787.7 L1030.3,789.4 L1030.0,791.4 L1029.0,793.2 L1027.2,794.7 L1026.2,796.7 L1025.1,798.7 L1023.9,800.6 L1022.4,802.4 L1022.0,804.8 L1020.2,806.3 L1018.1,807.9 L1016.2,809.8 L1013.6,810.7 L1012.8,812.9 L1014.5,815.1 L1013.0,817.3 L1014.5,819.5 L1013.2,821.7 L1013.9,823.9 L1013.8,826.1 L1013.6,828.3 L1011.4,827.6 L1009.2,829.3 L1007.0,829.2 L1004.8,827.5 L1002.7,828.3 L1000.5,829.1 L998.3,827.3 L996.1,827.4 L993.9,828.3 L992.9,830.2 L990.9,831.0 L989.8,832.8 L988.0,833.8 L986.0,834.7 L985.1,836.7 L982.9,837.2 L982.2,839.5 L980.5,840.6 L978.5,841.4 L977.4,843.5 L977.8,845.8 L977.2,848.0 L976.4,850.2 L976.2,852.4 L975.9,854.6 L975.2,856.8 L974.9,859.2 L972.6,860.3 L971.1,862.0 L970.0,863.9 L969.4,866.1 L968.8,868.3 L967.5,870.0 L967.8,872.2 L967.1,874.4 L967.2,876.6 L968.3,878.8 L967.5,881.0" fill="none" stroke="#828282" stroke-width="0.9"/>
<path d="M1020.2,806.3 L1022.1,807.4 L1023.1,809.5 L1024.7,811.0 L1026.1,812.7 L1028.6,813.2 L1030.1,814.7 L1031.8,816.0 L1033.3,817.6 L1034.5,819.5 L1032.7,820.8 L1032.2,823.1 L1030.2,824.2 L1029.3,826.2 L1027.7,827.6 L1026.1,829.0 L1024.6,830.5 L1024.7,832.9 L1025.9,834.9 L1026.8,837.0 L1030.0,838.4 L1031.9,836.8 L1034.3,836.6 L1036.4,835.7 L1038.8,835.7 L1041.0,837.1 L1043.6,837.0 L1046.4,837.3 L1049.0,836.3" fill="none" stroke="#828282" stroke-width="0.9"/>
<path d="M1101.0,762.4 L1101.1,764.6 L1099.3,766.2 L1098.7,768.2 L1097.5,770.0 L1098.1,772.4 L1097.5,774.4 L1095.9,776.1 L1095.4,778.1 L1095.4,780.3 L1094.4,782.2 L1094.8,784.5 L1096.1,786.5 L1096.1,789.0 L1098.1,790.8 L1098.6,793.0 L1098.8,795.4 L1100.8,796.9 L1103.3,796.6 L1105.5,797.1 L1107.4,798.8 L1109.7,799.2 L1112.0,799.7 L1113.1,801.5 L1112.7,803.7 L1112.9,805.7 L1114.3,807.5 L1114.1,809.6 L1116.1,809.2 L1117.6,807.5 L1119.6,807.2 L1121.4,806.0 L1123.3,805.5 L1125.7,806.3 L1127.2,804.5 L1129.5,804.9 L1131.0,803.1 L1133.0,802.7 L1135.1,802.5 L1136.9,801.5 L1138.3,799.7 L1140.5,799.7 L1142.6,801.0 L1144.8,802.1 L1147.4,802.4 L1149.3,804.1 L1151.4,803.1 L1153.8,804.4 L1155.9,803.4 L1158.0,802.6 L1160.2,802.8 L1162.4,802.1 L1164.7,803.1 L1166.8,802.2 L1169.0,802.0 L1167.1,800.8 L1166.9,798.2 L1164.5,797.3 L1163.5,795.4 L1161.8,794.0 L1161.7,791.4 L1160.0,790.0 L1158.8,788.2 L1159.3,786.0 L1158.0,784.2 L1158.4,782.0 L1158.0,780.0" fill="none" stroke="#828282" stroke-width="0.9"/>
<path d="M1114.1,809.6 L1115.6,811.4 L1118.4,810.7 L1119.7,812.9 L1122.1,812.8 L1123.3,815.3 L1126.1,814.5 L1127.2,817.0 L1129.5,817.3 L1131.6,818.5 L1133.6,819.7 L1135.7,820.9 L1138.5,820.3 L1140.5,821.7 L1140.1,824.0 L1138.6,826.0 L1138.7,828.4 L1137.9,830.7 L1137.3,832.9 L1136.0,834.9 L1133.7,834.5 L1131.5,834.9 L1129.4,835.4 L1127.4,836.8 L1125.0,835.8 L1123.0,837.0 L1121.2,835.9 L1119.1,835.3 L1117.5,833.8 L1115.6,832.8 L1113.4,832.3 L1112.0,830.5 L1111.7,832.7 L1111.9,834.9 L1111.3,837.0 L1110.4,839.2 L1110.8,841.4 L1110.9,843.6 L1112.6,845.2 L1113.4,847.6 L1114.7,849.5 L1117.0,850.6 L1118.5,852.4 L1116.7,853.8 L1117.2,856.6 L1115.9,858.3 L1114.7,860.1 L1112.3,861.1 L1112.0,863.4 L1110.0,866.3" fill="none" stroke="#828282" stroke-width="0.9"/>
<path d="M1239.3,614.0 L1241.5,614.3 L1243.7,615.1 L1245.9,615.6 L1248.0,616.3 L1250.3,617.9 L1252.4,619.6 L1250.7,620.9 L1248.6,621.6 L1247.0,623.0 L1245.0,621.7 L1243.9,619.5 L1242.0,618.0" fill="none" stroke="#828282" stroke-width="0.9"/>
<path d="M1230.0,660.2 L1231.6,661.9 L1232.9,664.0 L1235.0,665.3 L1233.8,667.2 L1234.9,669.4 L1233.8,671.4 L1233.6,673.4 L1233.8,675.5 L1231.9,676.2 L1230.6,678.2 L1228.9,679.4 L1226.8,679.8 L1224.9,680.6 L1222.7,680.5 L1220.8,681.9 L1218.5,681.8 L1216.5,682.6 L1214.2,682.0 L1212.2,683.1 L1212.5,680.3 L1211.0,678.0 L1212.6,676.3 L1215.2,675.7 L1215.7,672.8 L1218.4,672.4 L1219.8,670.4 L1221.9,669.4 L1222.3,666.8 L1224.7,666.1 L1226.0,664.3 L1227.4,662.7" fill="none" stroke="#828282" stroke-width="0.9"/>
<path d="M1186.7,660.0 L1188.6,658.9 L1190.9,659.4 L1192.7,658.2 L1194.7,657.5 L1196.9,657.6 L1198.8,656.9 L1200.7,656.3 L1202.6,655.6 L1204.5,655.0 L1205.6,657.0 L1207.0,658.9 L1208.0,661.0 L1208.2,663.4 L1209.6,665.3 L1208.3,667.1 L1206.3,668.1 L1204.6,669.5 L1203.0,670.9 L1202.0,673.0 L1199.8,672.8 L1198.3,674.8 L1196.4,675.4 L1194.3,675.5 L1193.0,673.9 L1191.2,672.8 L1189.2,672.1 L1188.0,670.4 L1190.3,668.4 L1192.0,666.0 L1194.2,666.0 L1196.2,665.3 L1198.0,664.0" fill="none" stroke="#828282" stroke-width="0.9"/>
<path d="M1192.0,679.0 L1194.1,678.8 L1196.1,678.6 L1198.0,677.5 L1200.0,677.0 L1202.0,678.4 L1204.1,679.5 L1206.0,681.0 L1203.3,681.1 L1201.5,683.4 L1199.0,684.0" fill="none" stroke="#828282" stroke-width="0.9"/>
<path d="M1237.0,681.0 L1237.9,683.5 L1240.0,685.0 L1237.8,686.2 L1236.0,688.0" fill="none" stroke="#828282" stroke-width="0.9"/>
<path d="M1162.0,790.0 L1164.3,790.4 L1165.8,792.3 L1167.9,793.2 L1170.0,794.0 L1172.0,795.0 L1173.7,793.5 L1176.3,793.5 L1178.3,792.6 L1180.0,791.0 L1181.0,792.8 L1182.0,794.6 L1183.5,796.1 L1184.9,797.7 L1185.0,800.0 L1183.4,801.7 L1181.4,802.9 L1180.3,805.2 L1178.0,806.0" fill="none" stroke="#828282" stroke-width="0.9"/>
<path d="M1138.0,812.0 L1140.3,812.2 L1141.8,810.0 L1143.7,809.1 L1146.3,810.3 L1147.8,808.1 L1150.0,808.0 L1152.4,808.6 L1153.8,810.8 L1156.2,811.5 L1158.0,813.0 L1155.6,813.6 L1154.3,816.0 L1151.5,816.0 L1150.0,818.0" fill="none" stroke="#828282" stroke-width="0.9"/>
<path d="M1179.0,808.0 L1181.0,809.6 L1183.2,810.4 L1185.5,811.0 L1188.0,811.0 L1187.2,813.9 L1185.0,816.0" fill="none" stroke="#828282" stroke-width="0.9"/>
<path d="M1117.9,686.9 L1120.4,686.1 L1123.0,685.7 L1124.6,687.7 L1125.5,689.9 L1126.4,692.2 L1126.8,694.6 L1128.6,693.6 L1129.3,691.3 L1130.9,690.1 L1132.8,689.1 L1134.0,687.4 L1136.1,686.6 L1136.8,684.4 L1138.3,683.0 L1139.9,681.2 L1141.9,679.8 L1143.4,678.0 L1145.7,678.3 L1147.3,680.5 L1149.9,680.2 L1152.0,681.1 L1153.8,682.5 L1156.1,683.0 L1157.6,681.1 L1160.1,680.8 L1162.3,679.9 L1163.8,678.0 L1165.8,677.2 L1168.2,678.1 L1170.2,676.8 L1172.4,676.9 L1174.4,675.8 L1176.5,675.5 L1178.5,676.6 L1180.6,677.6 L1182.8,678.4 L1184.1,680.6 L1186.3,680.2 L1188.3,682.1 L1190.5,681.3 L1192.6,681.3 L1194.7,682.5 L1196.9,681.8 L1199.4,682.5 L1201.8,683.7 L1204.5,683.1 L1205.7,685.2 L1207.0,687.3 L1206.5,690.1 L1208.3,692.0 L1210.4,692.7 L1211.3,695.1 L1213.3,696.0 L1214.5,698.0 L1216.2,699.2 L1218.5,699.7 L1216.7,700.7 L1216.0,703.0 L1214.4,704.3 L1212.2,704.8 L1210.2,704.9 L1208.1,704.1 L1206.1,705.7 L1204.0,705.0 L1202.0,704.8 L1200.7,707.1 L1198.4,708.3 L1196.9,710.4 L1194.3,711.1 L1194.0,713.3 L1193.0,715.4 L1193.0,717.7 L1191.2,719.5 L1192.1,722.0 L1190.5,723.9 L1192.7,724.9 L1194.4,726.5 L1196.0,728.3 L1197.2,730.4 L1199.4,731.5 L1199.3,734.1 L1198.2,736.5 L1198.2,739.1 L1196.1,740.5 L1196.3,743.4 L1193.6,744.4 L1193.0,746.8 L1192.4,748.9 L1191.6,750.9 L1191.5,753.1 L1191.5,755.3 L1191.8,757.6 L1190.5,759.5 L1188.6,761.2 L1186.3,762.1 L1184.1,763.0 L1181.6,763.3 L1183.6,765.5 L1184.1,768.4 L1186.8,768.4 L1189.2,769.7 L1189.5,771.8 L1189.5,774.1 L1189.9,776.2 L1190.2,778.3 L1192.2,780.1 L1191.8,782.4 L1191.6,784.6 L1193.5,786.3 L1194.2,788.3 L1194.3,790.4 L1194.3,792.6 L1192.2,792.8 L1190.3,794.4 L1188.0,793.9 L1186.2,792.1 L1185.2,789.7 L1184.1,787.5 L1182.9,785.3 L1180.5,784.3 L1179.0,782.4 L1177.3,781.3 L1175.7,780.1 L1173.7,779.4 L1172.7,777.4 L1171.4,779.2 L1170.8,781.2 L1170.7,783.3 L1170.8,785.5 L1170.1,787.5 L1168.4,786.3 L1166.7,785.3 L1165.6,783.4 L1163.8,782.4 L1160.0,782.4 L1159.3,780.3 L1157.7,778.8 L1157.8,776.3 L1156.1,774.8 L1155.9,772.5 L1154.2,770.7 L1154.9,768.2 L1153.9,766.2 L1152.4,764.3 L1152.3,762.0 L1151.2,759.6 L1151.0,757.0 L1148.9,756.6 L1146.8,758.1 L1144.7,757.5 L1142.5,756.4 L1140.4,758.1 L1138.3,757.6 L1136.1,756.9 L1134.0,757.0 L1131.9,757.3 L1129.8,758.0 L1127.7,757.2 L1125.6,758.3 L1123.6,759.4 L1121.1,758.7 L1119.3,760.3 L1117.0,760.4 L1114.9,761.1 L1112.8,762.0 L1110.5,762.5 L1108.2,761.6 L1106.0,761.8 L1103.7,760.9 L1101.4,762.0 L1100.1,759.9 L1098.1,758.3 L1096.4,756.5 L1095.0,754.4 L1094.4,752.3 L1092.2,751.4 L1091.5,749.4 L1089.9,748.0 L1091.5,746.7 L1093.2,745.5 L1093.2,742.9 L1095.0,741.7 L1096.2,739.7 L1096.0,737.2 L1097.8,735.5 L1098.7,733.4 L1099.7,731.3 L1100.0,729.0 L1101.4,727.3 L1100.7,725.0 L1102.7,723.5 L1102.3,721.2 L1103.0,719.4 L1103.1,717.3 L1104.6,715.6 L1105.2,713.7 L1105.9,711.4 L1107.9,710.3 L1110.0,709.3 L1111.7,707.9 L1112.8,706.0 L1114.0,703.8 L1116.6,703.1 L1117.9,701.0 L1117.8,699.0 L1117.3,697.0 L1118.4,695.0 L1118.4,692.9 L1117.8,690.9 L1118.0,688.9 L1117.9,686.9Z" fill="#35a1fb" stroke="#5b86ad" stroke-width="0.6"/>
<path d="M1193.0,689.5 L1195.4,689.6 L1197.6,690.4 L1199.7,691.6 L1202.0,692.0 L1204.1,692.6 L1205.6,694.4 L1207.5,695.2 L1209.6,695.8 L1207.7,697.3 L1206.2,699.3 L1204.5,701.0 L1202.0,700.2 L1199.4,700.4 L1196.9,699.7 L1196.2,697.6 L1195.2,695.7 L1194.5,693.6 L1194.3,691.3 L1193.0,689.5Z" fill="#fff" stroke="#7a8ea5" stroke-width="0.6"/>
<path d="M1190.5,723.9 L1186,727 L1181.6,731.5" fill="none" stroke="#d8e6f2" stroke-width="1"/>
<path d="M1196.9,767.2 L1198.7,766.3 L1200.9,766.5 L1202.5,765.0 L1204.5,764.6 L1207.0,765.9 L1208.3,768.4 L1210.9,769.7 L1213.4,771.0 L1212.1,773.0 L1211.4,775.1 L1210.9,777.4 L1211.1,779.6 L1209.6,781.2 L1209.5,783.3 L1208.3,785.0 L1206.2,787.1 L1203.2,787.5 L1200.7,786.5 L1198.2,787.5 L1198.1,785.4 L1196.9,783.5 L1197.2,781.3 L1196.7,779.3 L1195.6,777.4 L1194.9,775.2 L1195.9,773.3 L1196.0,771.2 L1195.7,769.1 L1196.9,767.2Z" fill="#35a1fb" stroke="#5b86ad" stroke-width="0.6"/>
<path d="M1219.8,708.6 L1223.6,713.7 L1218.5,718.8 L1216,716.2z" fill="#35a1fb" stroke="#5b86ad" stroke-width="0.6"/>
<circle cx="1217" cy="736" r="1.2" fill="#4a90d0"/>
<circle cx="1221" cy="737" r="1.2" fill="#4a90d0"/>
<circle cx="1263" cy="698.4" r="1.2" fill="#4a90d0"/>
<circle cx="1222" cy="721" r="1.2" fill="#4a90d0"/>
<circle cx="1205" cy="792" r="1.2" fill="#4a90d0"/>
<circle cx="1199" cy="796" r="1.2" fill="#4a90d0"/>
<circle cx="1184" cy="797" r="1.2" fill="#4a90d0"/>
<circle cx="1213" cy="794" r="1.2" fill="#4a90d0"/>
<circle cx="1210" cy="704" r="1.2" fill="#4a90d0"/>
<circle cx="1281" cy="640.5" r="1.2" fill="#4a90d0"/>
<path d="M1049.0,836.3 L1051.2,837.1 L1053.1,838.4 L1054.8,836.5 L1055.9,834.3 L1059.3,834.3 L1060.8,835.9 L1062.0,837.7 L1064.0,837.1 L1065.7,836.2 L1067.4,835.0 L1070.2,835.1 L1072.9,835.0 L1074.0,836.8 L1075.6,838.4 L1076.3,840.4 L1079.0,840.8 L1081.7,840.4 L1082.6,842.4 L1084.1,844.0 L1085.1,845.9 L1085.1,848.0 L1084.3,850.0 L1083.8,852.0 L1084.6,854.5 L1085.8,856.8 L1085.1,859.5 L1085.1,862.2 L1087.3,863.4 L1089.2,865.0 L1087.6,866.5 L1085.8,867.7 L1083.6,866.6 L1081.7,865.0 L1079.4,866.1 L1077.0,867.0 L1075.4,865.6 L1074.5,863.6 L1072.9,862.2 L1072.3,859.5 L1072.2,856.8 L1069.5,858.8 L1068.1,860.4 L1067.1,862.3 L1065.4,863.6 L1062.9,865.1 L1060.6,867.0 L1062.0,870.4 L1061.4,873.2 L1060.0,875.8 L1057.8,875.8 L1055.9,874.9 L1053.8,874.5 L1053.5,871.7 L1052.5,869.0 L1051.2,867.3 L1050.0,865.6 L1048.4,864.2 L1047.7,860.8 L1049.3,859.2 L1051.2,858.0 L1052.5,856.1 L1052.2,854.1 L1052.0,852.0 L1052.5,850.0 L1052.8,847.5 L1052.9,845.0 L1053.1,842.5 L1051.5,840.6 L1050.0,838.6 L1049.0,836.3Z" fill="#35a1fb" stroke="#5b86ad" stroke-width="0.6"/>
<path d="M1063.4,867.7 L1065.4,866.9 L1067.4,866.3 L1069.7,867.9 L1072.2,869.0 L1073.0,871.0 L1073.6,873.1 L1071.9,874.6 L1069.8,875.7 L1068.1,877.2 L1065.8,876.4 L1063.4,875.8 L1063.5,873.8 L1063.1,871.8 L1063.3,869.7 L1063.4,867.7Z" fill="#35a1fb" stroke="#5b86ad" stroke-width="0.6"/>
<path d="M1089.2,862.9 L1091.4,862.2 L1093.3,860.8 L1093.3,858.5 L1094.1,856.3 L1093.3,854.0 L1094.8,856.1 L1095.9,858.6 L1098.0,860.2 L1100.1,860.8 L1101.7,862.5 L1103.5,863.6 L1104.4,866.2 L1104.2,869.0 L1105.8,867.4 L1107.8,866.6 L1110.0,866.3" fill="none" stroke="#828282" stroke-width="0.9"/>
<path d="M1083.0,874.0 L1084.5,872.0 L1086.0,870.0 L1088.6,869.1 L1091.3,869.0 L1092.7,870.5 L1093.7,872.4 L1095.3,873.8 L1096.0,875.8 L1094.0,876.9 L1091.7,877.6 L1090.0,879.2 L1088.0,878.9 L1086.1,878.0 L1084.0,878.0" fill="none" stroke="#828282" stroke-width="0.9"/>
<path d="M1047.0,876.0 L1048.8,877.4 L1051.0,878.0 L1053.0,879.0 L1055.3,878.7 L1057.6,878.2 L1060.0,878.0 L1062.3,879.1 L1064.0,881.0" fill="none" stroke="#828282" stroke-width="0.9"/>
<path d="M1377.5,141.0 C1378.5,139.0 1380.0,140.2 1380.5,141.6 S1382.5,144.0 1383.5,142.4" fill="none" stroke="#2f86f6" stroke-width="1.5" stroke-linecap="round"/>
<text x="1393.0" y="145.9" font-size="12" fill="#333" text-anchor="start" font-weight="normal" >洋葱</text>
<path d="M1431,141.0 C1432,139.0 1433.5,140.2 1434,141.6 S1436,144.0 1437,142.4" fill="none" stroke="#1ec6d6" stroke-width="1.5" stroke-linecap="round"/>
<text x="1446.5" y="145.9" font-size="12" fill="#333" text-anchor="start" font-weight="normal" >猕猴桃</text>
<path d="M1495.4,141.0 C1496.4,139.0 1497.9,140.2 1498.4,141.6 S1500.4,144.0 1501.4,142.4" fill="none" stroke="#f07b3f" stroke-width="1.5" stroke-linecap="round"/>
<text x="1510.9" y="145.9" font-size="12" fill="#333" text-anchor="start" font-weight="normal" >功能饮料</text>
<path d="M1572.7,141.0 C1573.7,139.0 1575.2,140.2 1575.7,141.6 S1577.7,144.0 1578.7,142.4" fill="none" stroke="#d97cf0" stroke-width="1.5" stroke-linecap="round"/>
<text x="1588.2" y="145.9" font-size="12" fill="#333" text-anchor="start" font-weight="normal" >膨化食品</text>
<path d="M1650,141.0 C1651,139.0 1652.5,140.2 1653,141.6 S1655,144.0 1656,142.4" fill="none" stroke="#8b6df5" stroke-width="1.5" stroke-linecap="round"/>
<text x="1665.5" y="145.9" font-size="12" fill="#333" text-anchor="start" font-weight="normal" >燕麦</text>
<path d="M1701.6,141.0 C1702.6,139.0 1704.1,140.2 1704.6,141.6 S1706.6,144.0 1707.6,142.4" fill="none" stroke="#6acb3c" stroke-width="1.5" stroke-linecap="round"/>
<text x="1717.1" y="145.9" font-size="12" fill="#333" text-anchor="start" font-weight="normal" >文件柜</text>
<path d="M1767.7,141.0 C1768.7,139.0 1770.2,140.2 1770.7,141.6 S1772.7,144.0 1773.7,142.4" fill="none" stroke="#d4962f" stroke-width="1.5" stroke-linecap="round"/>
<text x="1783.2" y="145.9" font-size="12" fill="#333" text-anchor="start" font-weight="normal" >菠菜</text>
<path d="M1377.5,165.0 C1378.5,163.0 1380.0,164.2 1380.5,165.6 S1382.5,168.0 1383.5,166.4" fill="none" stroke="#f27cc6" stroke-width="1.5" stroke-linecap="round"/>
<text x="1393.0" y="169.9" font-size="12" fill="#333" text-anchor="start" font-weight="normal" >榴莲</text>
<path d="M1431,165.0 C1432,163.0 1433.5,164.2 1434,165.6 S1436,168.0 1437,166.4" fill="none" stroke="#2c9cc4" stroke-width="1.5" stroke-linecap="round"/>
<text x="1446.5" y="169.9" font-size="12" fill="#333" text-anchor="start" font-weight="normal" >普洱茶</text>
<path d="M1495.4,165.0 C1496.4,163.0 1497.9,164.2 1498.4,165.6 S1500.4,168.0 1501.4,166.4" fill="none" stroke="#27c46e" stroke-width="1.5" stroke-linecap="round"/>
<text x="1510.9" y="169.9" font-size="12" fill="#333" text-anchor="start" font-weight="normal" >话梅</text>
<path d="M1549.5,165.0 C1550.5,163.0 1552.0,164.2 1552.5,165.6 S1554.5,168.0 1555.5,166.4" fill="none" stroke="#a9b81c" stroke-width="1.5" stroke-linecap="round"/>
<text x="1565.0" y="169.9" font-size="12" fill="#333" text-anchor="start" font-weight="normal" >芝麻</text>
<path d="M1601.5,165.0 C1602.5,163.0 1604.0,164.2 1604.5,165.6 S1606.5,168.0 1607.5,166.4" fill="none" stroke="#b47cf3" stroke-width="1.5" stroke-linecap="round"/>
<text x="1617.0" y="169.9" font-size="12" fill="#333" text-anchor="start" font-weight="normal" >办公椅</text>
<path d="M1665.8,165.0 C1666.8,163.0 1668.3,164.2 1668.8,165.6 S1670.8,168.0 1671.8,166.4" fill="none" stroke="#2f7fd4" stroke-width="1.5" stroke-linecap="round"/>
<text x="1681.3" y="169.9" font-size="12" fill="#333" text-anchor="start" font-weight="normal" >胡萝卜</text>
<path d="M1731.5,165.0 C1732.5,163.0 1734.0,164.2 1734.5,165.6 S1736.5,168.0 1737.5,166.4" fill="none" stroke="#3fd08c" stroke-width="1.5" stroke-linecap="round"/>
<text x="1747.0" y="169.9" font-size="12" fill="#333" text-anchor="start" font-weight="normal" >葡萄</text>
<path d="M1785,165.0 C1786,163.0 1787.5,164.2 1788,165.6 S1790,168.0 1791,166.4" fill="none" stroke="#e0843e" stroke-width="1.5" stroke-linecap="round"/>
<text x="1800.5" y="169.9" font-size="12" fill="#333" text-anchor="start" font-weight="normal" >奶茶</text>
<path d="M1377.5,189.4 C1378.5,187.4 1380.0,188.6 1380.5,190 S1382.5,192.4 1383.5,190.8" fill="none" stroke="#f487d8" stroke-width="1.5" stroke-linecap="round"/>
<text x="1393.0" y="194.3" font-size="12" fill="#333" text-anchor="start" font-weight="normal" >薯片礼盒</text>
<path d="M1454,189.4 C1455,187.4 1456.5,188.6 1457,190 S1459,192.4 1460,190.8" fill="none" stroke="#4f57d6" stroke-width="1.5" stroke-linecap="round"/>
<text x="1469.5" y="194.3" font-size="12" fill="#333" text-anchor="start" font-weight="normal" >大豆</text>
<path d="M1507.7,189.4 C1508.7,187.4 1510.2,188.6 1510.7,190 S1512.7,192.4 1513.7,190.8" fill="none" stroke="#9fd629" stroke-width="1.5" stroke-linecap="round"/>
<text x="1523.2" y="194.3" font-size="12" fill="#333" text-anchor="start" font-weight="normal" >订书机</text>
<path d="M1572.7,189.4 C1573.7,187.4 1575.2,188.6 1575.7,190 S1577.7,192.4 1578.7,190.8" fill="none" stroke="#d6aa1b" stroke-width="1.5" stroke-linecap="round"/>
<text x="1588.2" y="194.3" font-size="12" fill="#333" text-anchor="start" font-weight="normal" >青椒</text>
<path d="M1625.4,189.4 C1626.4,187.4 1627.9,188.6 1628.4,190 S1630.4,192.4 1631.4,190.8" fill="none" stroke="#f48ccd" stroke-width="1.5" stroke-linecap="round"/>
<text x="1640.9" y="194.3" font-size="12" fill="#333" text-anchor="start" font-weight="normal" >草莓</text>
<path d="M1678.8,189.4 C1679.8,187.4 1681.3,188.6 1681.8,190 S1683.8,192.4 1684.8,190.8" fill="none" stroke="#2b8ef2" stroke-width="1.5" stroke-linecap="round"/>
<text x="1694.3" y="194.3" font-size="12" fill="#333" text-anchor="start" font-weight="normal" >果汁</text>
<path d="M1731.5,189.4 C1732.5,187.4 1734.0,188.6 1734.5,190 S1736.5,192.4 1737.5,190.8" fill="none" stroke="#1fc4d4" stroke-width="1.5" stroke-linecap="round"/>
<text x="1747.0" y="194.3" font-size="12" fill="#333" text-anchor="start" font-weight="normal" >夹心饼干</text>
<path d="M1839,165.6 L1851,159.5 L1851,171.7Z" fill="#5f6368"/><path d="M1889,165.6 L1879,159.5 L1879,171.7Z" fill="#5f6368"/>
<text x="1865.5" y="169.8" font-size="12" fill="#999" text-anchor="middle" font-weight="normal" >1/3</text>
<line x1="1454" y1="210.5" x2="1876" y2="210.5" stroke="#e6e6e6" stroke-dasharray="3,3"/>
<line x1="1449" y1="210.5" x2="1454" y2="210.5" stroke="#999"/>
<line x1="1454" y1="221.4" x2="1876" y2="221.4" stroke="#e6e6e6" stroke-dasharray="3,3"/>
<line x1="1449" y1="221.4" x2="1454" y2="221.4" stroke="#999"/>
<line x1="1454" y1="232.2" x2="1876" y2="232.2" stroke="#e6e6e6" stroke-dasharray="3,3"/>
<line x1="1449" y1="232.2" x2="1454" y2="232.2" stroke="#999"/>
<line x1="1454" y1="242.3" x2="1876" y2="242.3" stroke="#e6e6e6" stroke-dasharray="3,3"/>
<line x1="1449" y1="242.3" x2="1454" y2="242.3" stroke="#999"/>
<line x1="1454" y1="253" x2="1876" y2="253" stroke="#e6e6e6" stroke-dasharray="3,3"/>
<line x1="1449" y1="253" x2="1454" y2="253" stroke="#999"/>
<line x1="1454" y1="264.1" x2="1876" y2="264.1" stroke="#e6e6e6" stroke-dasharray="3,3"/>
<line x1="1449" y1="264.1" x2="1454" y2="264.1" stroke="#999"/>
<line x1="1454" y1="264.1" x2="1876" y2="264.1" stroke="#e6e6e6" stroke-dasharray="3,3"/>
<text x="1446" y="225.5" font-size="12" fill="#999" text-anchor="end" font-weight="normal" >800人</text>
<text x="1446" y="246.5" font-size="12" fill="#999" text-anchor="end" font-weight="normal" >400人</text>
<text x="1446" y="268" font-size="12" fill="#999" text-anchor="end" font-weight="normal" >0人</text>
<text transform="translate(1382,237.7) rotate(-90)" font-size="12" fill="#333" text-anchor="middle">num</text>
<line x1="1453.8" y1="264" x2="1453.8" y2="270" stroke="#aaa"/>
<line x1="1462.4" y1="264" x2="1462.4" y2="270" stroke="#aaa"/>
<line x1="1471.0" y1="264" x2="1471.0" y2="270" stroke="#aaa"/>
<line x1="1479.5" y1="264" x2="1479.5" y2="270" stroke="#aaa"/>
<line x1="1488.1" y1="264" x2="1488.1" y2="270" stroke="#aaa"/>
<line x1="1496.7" y1="264" x2="1496.7" y2="270" stroke="#aaa"/>
<line x1="1505.2" y1="264" x2="1505.2" y2="270" stroke="#aaa"/>
<line x1="1513.8" y1="264" x2="1513.8" y2="270" stroke="#aaa"/>
<line x1="1522.4" y1="264" x2="1522.4" y2="270" stroke="#aaa"/>
<line x1="1531.0" y1="264" x2="1531.0" y2="270" stroke="#aaa"/>
<line x1="1539.5" y1="264" x2="1539.5" y2="270" stroke="#aaa"/>
<line x1="1548.1" y1="264" x2="1548.1" y2="270" stroke="#aaa"/>
<line x1="1556.7" y1="264" x2="1556.7" y2="270" stroke="#aaa"/>
<line x1="1565.3" y1="264" x2="1565.3" y2="270" stroke="#aaa"/>
<line x1="1573.8" y1="264" x2="1573.8" y2="270" stroke="#aaa"/>
<line x1="1582.4" y1="264" x2="1582.4" y2="270" stroke="#aaa"/>
<line x1="1591.0" y1="264" x2="1591.0" y2="270" stroke="#aaa"/>
<line x1="1599.6" y1="264" x2="1599.6" y2="270" stroke="#aaa"/>
<line x1="1608.1" y1="264" x2="1608.1" y2="270" stroke="#aaa"/>
<line x1="1616.7" y1="264" x2="1616.7" y2="270" stroke="#aaa"/>
<line x1="1625.3" y1="264" x2="1625.3" y2="270" stroke="#aaa"/>
<line x1="1633.9" y1="264" x2="1633.9" y2="270" stroke="#aaa"/>
<line x1="1642.4" y1="264" x2="1642.4" y2="270" stroke="#aaa"/>
<line x1="1651.0" y1="264" x2="1651.0" y2="270" stroke="#aaa"/>
<line x1="1659.6" y1="264" x2="1659.6" y2="270" stroke="#aaa"/>
<line x1="1668.2" y1="264" x2="1668.2" y2="270" stroke="#aaa"/>
<line x1="1676.8" y1="264" x2="1676.8" y2="270" stroke="#aaa"/>
<line x1="1685.3" y1="264" x2="1685.3" y2="270" stroke="#aaa"/>
<line x1="1693.9" y1="264" x2="1693.9" y2="270" stroke="#aaa"/>
<line x1="1702.5" y1="264" x2="1702.5" y2="270" stroke="#aaa"/>
<line x1="1711.0" y1="264" x2="1711.0" y2="270" stroke="#aaa"/>
<line x1="1719.6" y1="264" x2="1719.6" y2="270" stroke="#aaa"/>
<line x1="1728.2" y1="264" x2="1728.2" y2="270" stroke="#aaa"/>
<line x1="1736.8" y1="264" x2="1736.8" y2="270" stroke="#aaa"/>
<line x1="1745.3" y1="264" x2="1745.3" y2="270" stroke="#aaa"/>
<line x1="1753.9" y1="264" x2="1753.9" y2="270" stroke="#aaa"/>
<line x1="1762.5" y1="264" x2="1762.5" y2="270" stroke="#aaa"/>
<line x1="1771.1" y1="264" x2="1771.1" y2="270" stroke="#aaa"/>
<line x1="1779.6" y1="264" x2="1779.6" y2="270" stroke="#aaa"/>
<line x1="1788.2" y1="264" x2="1788.2" y2="270" stroke="#aaa"/>
<line x1="1796.8" y1="264" x2="1796.8" y2="270" stroke="#aaa"/>
<line x1="1805.4" y1="264" x2="1805.4" y2="270" stroke="#aaa"/>
<line x1="1813.9" y1="264" x2="1813.9" y2="270" stroke="#aaa"/>
<line x1="1822.5" y1="264" x2="1822.5" y2="270" stroke="#aaa"/>
<line x1="1831.1" y1="264" x2="1831.1" y2="270" stroke="#aaa"/>
<line x1="1839.7" y1="264" x2="1839.7" y2="270" stroke="#aaa"/>
<line x1="1848.2" y1="264" x2="1848.2" y2="270" stroke="#aaa"/>
<line x1="1856.8" y1="264" x2="1856.8" y2="270" stroke="#aaa"/>
<line x1="1865.4" y1="264" x2="1865.4" y2="270" stroke="#aaa"/>
<line x1="1874.0" y1="264" x2="1874.0" y2="270" stroke="#aaa"/>
<text transform="translate(1449.2,271) rotate(90)" font-size="12" fill="#999">洋葱月</text>
<text transform="translate(1466.4,271) rotate(90)" font-size="12" fill="#999">功能饮料月</text>
<text transform="translate(1483.5,271) rotate(90)" font-size="12" fill="#999">燕麦月</text>
<text transform="translate(1500.7,271) rotate(90)" font-size="12" fill="#999">菠菜月</text>
<text transform="translate(1517.8,271) rotate(90)" font-size="12" fill="#999">普洱茶月</text>
<text transform="translate(1535.0,271) rotate(90)" font-size="12" fill="#999">芝麻月</text>
<text transform="translate(1552.1,271) rotate(90)" font-size="12" fill="#999">胡萝卜月</text>
<text transform="translate(1569.2,271) rotate(90)" font-size="12" fill="#999">奶茶月</text>
<text transform="translate(1586.4,271) rotate(90)" font-size="12" fill="#999">大豆月</text>
<text transform="translate(1603.5,271) rotate(90)" font-size="12" fill="#999">青椒月</text>
<text transform="translate(1620.7,271) rotate(90)" font-size="12" fill="#999">果汁月</text>
<text transform="translate(1637.8,271) rotate(90)" font-size="12" fill="#999">小米月</text>
<text transform="translate(1655.0,271) rotate(90)" font-size="12" fill="#999">黄瓜月</text>
<text transform="translate(1672.2,271) rotate(90)" font-size="12" fill="#999">碳酸饮料月</text>
<text transform="translate(1689.3,271) rotate(90)" font-size="12" fill="#999">绿豆月</text>
<text transform="translate(1706.5,271) rotate(90)" font-size="12" fill="#999">精品有机红薯月</text>
<text transform="translate(1723.6,271) rotate(90)" font-size="12" fill="#999">黄心土豆月</text>
<text transform="translate(1740.8,271) rotate(90)" font-size="12" fill="#999">现磨咖啡月</text>
<text transform="translate(1757.9,271) rotate(90)" font-size="12" fill="#999">花生米月</text>
<text transform="translate(1775.0,271) rotate(90)" font-size="12" fill="#999">西兰花月</text>
<text transform="translate(1792.2,271) rotate(90)" font-size="12" fill="#999">冰红茶月</text>
<text transform="translate(1809.3,271) rotate(90)" font-size="12" fill="#999">黄玉米月</text>
<text transform="translate(1826.5,271) rotate(90)" font-size="12" fill="#999">新鲜西红柿月</text>
<text transform="translate(1843.7,271) rotate(90)" font-size="12" fill="#999">瓶装矿泉水月</text>
<text transform="translate(1860.8,271) rotate(90)" font-size="12" fill="#999">东北大米月</text>
<circle cx="1453.8" cy="248.3" r="1.5" fill="#2f86f6"/>
<circle cx="1462.4" cy="254.8" r="1.5" fill="#1ec6d6"/>
<circle cx="1471.0" cy="248.8" r="1.5" fill="#f07b3f"/>
<circle cx="1479.5" cy="247.4" r="1.5" fill="#d97cf0"/>
<circle cx="1488.1" cy="236.4" r="1.5" fill="#8b6df5"/>
<circle cx="1496.7" cy="262.7" r="1.5" fill="#6acb3c"/>
<circle cx="1505.2" cy="258" r="1.5" fill="#d4962f"/>
<circle cx="1513.8" cy="261.5" r="1.5" fill="#f27cc6"/>
<circle cx="1522.4" cy="260.3" r="1.5" fill="#2c9cc4"/>
<circle cx="1531.0" cy="249.5" r="1.5" fill="#27c46e"/>
<circle cx="1539.5" cy="243.6" r="1.5" fill="#a9b81c"/>
<circle cx="1548.1" cy="261.5" r="1.5" fill="#b47cf3"/>
<circle cx="1556.7" cy="251" r="1.5" fill="#2f7fd4"/>
<circle cx="1565.3" cy="256.7" r="1.5" fill="#3fd08c"/>
<circle cx="1573.8" cy="257.4" r="1.5" fill="#e0843e"/>
<circle cx="1582.4" cy="259.2" r="1.5" fill="#f487d8"/>
<circle cx="1591.0" cy="215.3" r="1.5" fill="#4f57d6"/>
<circle cx="1599.6" cy="245.3" r="1.5" fill="#9fd629"/>
<circle cx="1608.1" cy="255.9" r="1.5" fill="#d6aa1b"/>
<circle cx="1616.7" cy="258.9" r="1.5" fill="#f48ccd"/>
<circle cx="1625.3" cy="253.9" r="1.5" fill="#2b8ef2"/>
<circle cx="1633.9" cy="248.7" r="1.5" fill="#1fc4d4"/>
<circle cx="1642.4" cy="217" r="1.5" fill="#2f86f6"/>
<circle cx="1651.0" cy="260.3" r="1.5" fill="#1ec6d6"/>
<circle cx="1659.6" cy="254" r="1.5" fill="#f07b3f"/>
<circle cx="1668.2" cy="252.5" r="1.5" fill="#d97cf0"/>
<circle cx="1676.8" cy="243.4" r="1.5" fill="#8b6df5"/>
<circle cx="1685.3" cy="257.8" r="1.5" fill="#6acb3c"/>
<circle cx="1693.9" cy="225.8" r="1.5" fill="#d4962f"/>
<circle cx="1702.5" cy="241.7" r="1.5" fill="#f27cc6"/>
<circle cx="1711.0" cy="234.6" r="1.5" fill="#2c9cc4"/>
<circle cx="1719.6" cy="259.6" r="1.5" fill="#27c46e"/>
<circle cx="1728.2" cy="253.3" r="1.5" fill="#a9b81c"/>
<circle cx="1736.8" cy="260.3" r="1.5" fill="#b47cf3"/>
<circle cx="1745.3" cy="259.6" r="1.5" fill="#2f7fd4"/>
<circle cx="1753.9" cy="247" r="1.5" fill="#3fd08c"/>
<circle cx="1762.5" cy="241.7" r="1.5" fill="#e0843e"/>
<circle cx="1771.1" cy="248.7" r="1.5" fill="#f487d8"/>
<circle cx="1779.6" cy="259.6" r="1.5" fill="#4f57d6"/>
<circle cx="1788.2" cy="255.7" r="1.5" fill="#9fd629"/>
<circle cx="1796.8" cy="252.5" r="1.5" fill="#d6aa1b"/>
<circle cx="1805.4" cy="258.5" r="1.5" fill="#f48ccd"/>
<circle cx="1813.9" cy="228" r="1.5" fill="#2b8ef2"/>
<circle cx="1822.5" cy="245.2" r="1.5" fill="#1fc4d4"/>
<circle cx="1831.1" cy="257.5" r="1.5" fill="#2f86f6"/>
<circle cx="1839.7" cy="259.2" r="1.5" fill="#1ec6d6"/>
<circle cx="1848.2" cy="249.7" r="1.5" fill="#f07b3f"/>
<circle cx="1856.8" cy="254" r="1.5" fill="#d97cf0"/>
<circle cx="1865.4" cy="218.8" r="1.5" fill="#8b6df5"/>
<circle cx="1874.0" cy="257.5" r="1.5" fill="#6acb3c"/>
<text x="1378" y="456.5" font-size="16" fill="#333" text-anchor="start" font-weight="bold" >北京上海温度趋势上半年对比</text>
<path d="M1377.5,487.79999999999995 C1378.5,485.79999999999995 1380.0,487.0 1380.5,488.4 S1382.5,490.79999999999995 1383.5,489.2" fill="none" stroke="#2a7cf0" stroke-width="1.5" stroke-linecap="round"/>
<text x="1393" y="492.6" font-size="12" fill="#333" text-anchor="start" font-weight="normal" >北京</text>
<path d="M1431,487.79999999999995 C1432,485.79999999999995 1433.5,487.0 1434,488.4 S1436,490.79999999999995 1437,489.2" fill="none" stroke="#14c4c4" stroke-width="1.5" stroke-linecap="round"/>
<text x="1447" y="492.6" font-size="12" fill="#333" text-anchor="start" font-weight="normal" >上海</text>
<line x1="1442" y1="508.9" x2="1871" y2="508.9" stroke="#e6e6e6" stroke-dasharray="3,3"/>
<line x1="1437" y1="508.9" x2="1442" y2="508.9" stroke="#999"/>
<text x="1433" y="513.1" font-size="12" fill="#999" text-anchor="end" font-weight="normal" >25°C</text>
<line x1="1442" y1="523.9" x2="1871" y2="523.9" stroke="#e6e6e6" stroke-dasharray="3,3"/>
<line x1="1437" y1="523.9" x2="1442" y2="523.9" stroke="#999"/>
<text x="1433" y="528.07" font-size="12" fill="#999" text-anchor="end" font-weight="normal" >20°C</text>
<line x1="1442" y1="538.8" x2="1871" y2="538.8" stroke="#e6e6e6" stroke-dasharray="3,3"/>
<line x1="1437" y1="538.8" x2="1442" y2="538.8" stroke="#999"/>
<text x="1433" y="543.0400000000001" font-size="12" fill="#999" text-anchor="end" font-weight="normal" >15°C</text>
<line x1="1442" y1="553.8" x2="1871" y2="553.8" stroke="#e6e6e6" stroke-dasharray="3,3"/>
<line x1="1437" y1="553.8" x2="1442" y2="553.8" stroke="#999"/>
<text x="1433" y="558.01" font-size="12" fill="#999" text-anchor="end" font-weight="normal" >10°C</text>
<line x1="1442" y1="568.8" x2="1871" y2="568.8" stroke="#e6e6e6" stroke-dasharray="3,3"/>
<line x1="1437" y1="568.8" x2="1442" y2="568.8" stroke="#999"/>
<text x="1433" y="572.98" font-size="12" fill="#999" text-anchor="end" font-weight="normal" >5°C</text>
<line x1="1442" y1="583.8" x2="1871" y2="583.8" stroke="#e6e6e6" stroke-dasharray="3,3"/>
<line x1="1437" y1="583.8" x2="1442" y2="583.8" stroke="#999"/>
<text x="1433" y="587.95" font-size="12" fill="#999" text-anchor="end" font-weight="normal" >0°C</text>
<line x1="1442" y1="598.7" x2="1871" y2="598.7" stroke="#e6e6e6" stroke-dasharray="3,3"/>
<line x1="1437" y1="598.7" x2="1442" y2="598.7" stroke="#999"/>
<text x="1433" y="602.9200000000001" font-size="12" fill="#999" text-anchor="end" font-weight="normal" >-5°C</text>
<text transform="translate(1382.5,554.5) rotate(-90)" font-size="12" fill="#333" text-anchor="middle">温度</text>
<line x1="1476.9" y1="598.7" x2="1476.9" y2="604" stroke="#999"/>
<text x="1476.9" y="618.6" font-size="12" fill="#999" text-anchor="middle" font-weight="normal" >一月</text>
<line x1="1549" y1="598.7" x2="1549" y2="604" stroke="#999"/>
<text x="1549" y="618.6" font-size="12" fill="#999" text-anchor="middle" font-weight="normal" >二月</text>
<line x1="1621.5" y1="598.7" x2="1621.5" y2="604" stroke="#999"/>
<text x="1621.5" y="618.6" font-size="12" fill="#999" text-anchor="middle" font-weight="normal" >三月</text>
<line x1="1693.7" y1="598.7" x2="1693.7" y2="604" stroke="#999"/>
<text x="1693.7" y="618.6" font-size="12" fill="#999" text-anchor="middle" font-weight="normal" >四月</text>
<line x1="1765.8" y1="598.7" x2="1765.8" y2="604" stroke="#999"/>
<text x="1765.8" y="618.6" font-size="12" fill="#999" text-anchor="middle" font-weight="normal" >五月</text>
<line x1="1837.6" y1="598.7" x2="1837.6" y2="604" stroke="#999"/>
<text x="1837.6" y="618.6" font-size="12" fill="#999" text-anchor="middle" font-weight="normal" >六月</text>
<text x="1658" y="646.5" font-size="12" fill="#333" text-anchor="middle" font-weight="normal" >月份</text>
<path d="M1476.9,598.7 C1489.9,597.4 1523.0,596.9 1549,591.6 C1575.0,586.3 1595.5,577.6 1621.5,569.1 C1647.5,560.6 1667.7,552.1 1693.7,544.3 C1719.7,536.5 1739.9,531.1 1765.8,525.5 C1791.7,519.9 1824.7,515.2 1837.6,513" fill="none" stroke="#2a7cf0" stroke-width="1.3"/>
<circle cx="1476.9" cy="598.7" r="3" fill="#2a7cf0"/>
<circle cx="1549" cy="591.6" r="3" fill="#2a7cf0"/>
<circle cx="1621.5" cy="569.1" r="3" fill="#2a7cf0"/>
<circle cx="1693.7" cy="544.3" r="3" fill="#2a7cf0"/>
<circle cx="1765.8" cy="525.5" r="3" fill="#2a7cf0"/>
<circle cx="1837.6" cy="513" r="3" fill="#2a7cf0"/>
<path d="M1476.9,577.6 C1489.9,576.7 1523.0,576.4 1549,572.5 C1575.0,568.6 1595.5,562.2 1621.5,556.2 C1647.5,550.2 1667.7,545.1 1693.7,539.2 C1719.7,533.3 1739.9,528.8 1765.8,523.5 C1791.7,518.2 1824.7,512.3 1837.6,509.9" fill="none" stroke="#14c4c4" stroke-width="1.3"/>
<circle cx="1476.9" cy="577.6" r="3" fill="#14c4c4"/>
<circle cx="1549" cy="572.5" r="3" fill="#14c4c4"/>
<circle cx="1621.5" cy="556.2" r="3" fill="#14c4c4"/>
<circle cx="1693.7" cy="539.2" r="3" fill="#14c4c4"/>
<circle cx="1765.8" cy="523.5" r="3" fill="#14c4c4"/>
<circle cx="1837.6" cy="509.9" r="3" fill="#14c4c4"/>
<text x="1378" y="760.8" font-size="16" fill="#333" text-anchor="start" font-weight="bold" >身高体重分布散点图</text>
<circle cx="1381" cy="793" r="3.3" fill="none" stroke="#3d8af0" stroke-width="1.3"/>
<text x="1393.3" y="797.2" font-size="12" fill="#333" text-anchor="start" font-weight="normal" >男</text>
<circle cx="1422" cy="793" r="3.3" fill="none" stroke="#22c7d0" stroke-width="1.3"/>
<text x="1434.5" y="797.2" font-size="12" fill="#333" text-anchor="start" font-weight="normal" >女</text>
<line x1="1437" y1="813.5" x2="1874" y2="813.5" stroke="#eeeeee" stroke-dasharray="3,3"/>
<line x1="1432" y1="813.5" x2="1437" y2="813.5" stroke="#999"/>
<text x="1428" y="817.7" font-size="12" fill="#999" text-anchor="end" font-weight="normal" >100</text>
<line x1="1437" y1="828.5" x2="1874" y2="828.5" stroke="#eeeeee" stroke-dasharray="3,3"/>
<line x1="1432" y1="828.5" x2="1437" y2="828.5" stroke="#999"/>
<text x="1428" y="832.7" font-size="12" fill="#999" text-anchor="end" font-weight="normal" >90</text>
<line x1="1437" y1="843.5" x2="1874" y2="843.5" stroke="#eeeeee" stroke-dasharray="3,3"/>
<line x1="1432" y1="843.5" x2="1437" y2="843.5" stroke="#999"/>
<text x="1428" y="847.7" font-size="12" fill="#999" text-anchor="end" font-weight="normal" >80</text>
<line x1="1437" y1="858.5" x2="1874" y2="858.5" stroke="#eeeeee" stroke-dasharray="3,3"/>
<line x1="1432" y1="858.5" x2="1437" y2="858.5" stroke="#999"/>
<text x="1428" y="862.7" font-size="12" fill="#999" text-anchor="end" font-weight="normal" >70</text>
<line x1="1437" y1="873.5" x2="1874" y2="873.5" stroke="#eeeeee" stroke-dasharray="3,3"/>
<line x1="1432" y1="873.5" x2="1437" y2="873.5" stroke="#999"/>
<text x="1428" y="877.7" font-size="12" fill="#999" text-anchor="end" font-weight="normal" >60</text>
<line x1="1437" y1="888.5" x2="1874" y2="888.5" stroke="#eeeeee" stroke-dasharray="3,3"/>
<line x1="1432" y1="888.5" x2="1437" y2="888.5" stroke="#999"/>
<text x="1428" y="892.7" font-size="12" fill="#999" text-anchor="end" font-weight="normal" >50</text>
<line x1="1497.7" y1="813" x2="1497.7" y2="900" stroke="#eeeeee" stroke-dasharray="3,3"/>
<line x1="1560.4" y1="813" x2="1560.4" y2="900" stroke="#eeeeee" stroke-dasharray="3,3"/>
<line x1="1623.4" y1="813" x2="1623.4" y2="900" stroke="#eeeeee" stroke-dasharray="3,3"/>
<line x1="1686" y1="813" x2="1686" y2="900" stroke="#eeeeee" stroke-dasharray="3,3"/>
<line x1="1748.8" y1="813" x2="1748.8" y2="900" stroke="#eeeeee" stroke-dasharray="3,3"/>
<line x1="1811" y1="813" x2="1811" y2="900" stroke="#eeeeee" stroke-dasharray="3,3"/>
<line x1="1873.5" y1="813" x2="1873.5" y2="900" stroke="#eeeeee" stroke-dasharray="3,3"/>
<text transform="translate(1382.5,862) rotate(-90)" font-size="12" fill="#333" text-anchor="middle">体重(kg)</text>
<circle cx="1867.4" cy="816.3" r="3.3" fill="none" stroke="#3d8af0" stroke-width="1.3"/>
<circle cx="1785.8" cy="827.4" r="3.3" fill="none" stroke="#3d8af0" stroke-width="1.3"/>
<circle cx="1737" cy="830" r="3.3" fill="none" stroke="#3d8af0" stroke-width="1.3"/>
<circle cx="1720.8" cy="837.7" r="3.3" fill="none" stroke="#3d8af0" stroke-width="1.3"/>
<circle cx="1708" cy="839.8" r="3.3" fill="none" stroke="#3d8af0" stroke-width="1.3"/>
<circle cx="1752.3" cy="839.2" r="3.3" fill="none" stroke="#3d8af0" stroke-width="1.3"/>
<circle cx="1737" cy="845.1" r="3.3" fill="none" stroke="#3d8af0" stroke-width="1.3"/>
<circle cx="1752.3" cy="854.2" r="3.3" fill="none" stroke="#3d8af0" stroke-width="1.3"/>
<circle cx="1785.8" cy="864.8" r="3.3" fill="none" stroke="#3d8af0" stroke-width="1.3"/>
<circle cx="1592.8" cy="849.5" r="3.3" fill="none" stroke="#3d8af0" stroke-width="1.3"/>
<circle cx="1625.7" cy="870.4" r="3.3" fill="none" stroke="#3d8af0" stroke-width="1.3"/>
<circle cx="1500" cy="851" r="3.3" fill="none" stroke="#22c7d0" stroke-width="1.3"/>
<circle cx="1572.8" cy="859" r="3.3" fill="none" stroke="#22c7d0" stroke-width="1.3"/>
<circle cx="1591.6" cy="875.4" r="3.3" fill="none" stroke="#22c7d0" stroke-width="1.3"/>
<circle cx="1622.8" cy="875.1" r="3.3" fill="none" stroke="#22c7d0" stroke-width="1.3"/>
<circle cx="1656.6" cy="871" r="3.3" fill="none" stroke="#22c7d0" stroke-width="1.3"/>
<circle cx="1659.6" cy="870.1" r="3.3" fill="none" stroke="#22c7d0" stroke-width="1.3"/>
<circle cx="1700.8" cy="863.4" r="3.3" fill="none" stroke="#22c7d0" stroke-width="1.3"/>
<circle cx="1704.6" cy="853.6" r="3.3" fill="none" stroke="#22c7d0" stroke-width="1.3"/>
<circle cx="1688" cy="877.2" r="3.3" fill="none" stroke="#22c7d0" stroke-width="1.3"/>
<circle cx="1634.6" cy="882" r="3.3" fill="none" stroke="#22c7d0" stroke-width="1.3"/>
<circle cx="1654.3" cy="881" r="3.3" fill="none" stroke="#22c7d0" stroke-width="1.3"/>
<circle cx="1491" cy="882.5" r="3.3" fill="none" stroke="#22c7d0" stroke-width="1.3"/></g></svg></div>
<div class="abs" style="left:300px;top:60px;width:1620px;height:1px;background:#ebebec;z-index:2"></div>
<div id="foot" class="abs">Gadmin V9.0 [当前系统版本：9.0.7]</div>
<div class="abs" style="left:1905px;top:60px;width:15px;height:821px;background:#f7f8fa;z-index:5"></div><div class="abs" style="left:1912px;top:60px;width:8px;height:821px;background:#f1f1f2;z-index:5"></div><div class="abs" style="left:1906px;top:60px;width:6px;height:489px;background:#a3a3a5;border-radius:3px;z-index:6"></div><div class="abs" style="left:1910px;top:300px;width:7px;height:58px;border-radius:4px;background:linear-gradient(180deg,rgba(240,240,240,0.9) 0%,rgba(225,225,225,0.9) 64%,#20c6a6 65%,#1a9cf6 100%);box-shadow:0 0 2px rgba(0,0,0,0.15);z-index:7"></div><div class="abs" style="left:1803px;top:853px;width:109px;height:28px;background:#222;z-index:8;border-top-left-radius:4px;overflow:hidden"><div class="abs" style="left:0;top:0;width:30px;height:28px;background:#6cb33e;border-top-left-radius:4px;overflow:hidden"><svg width="30" height="28" viewBox="0 0 30 28"><path d="M0 0h30L15 13z" fill="#86c35c"/><path d="M16.5,4 C18.5,7 18.5,12 16.7,14.6 C15,16.5 8,19 5.8,21.6 L4,24.4 C2,22.5 1.8,18.5 3,16.7 C5,14 12,12 13.9,9.3 C15.5,7.5 16.3,5.5 16.5,4z" fill="#fff"/><path d="M22.6,10.3 C24,13 24.2,18 21.6,20.9 C19,23 14.5,24 11.8,27.5 L7.5,27.5 C6.8,25.5 7,24.5 8,23.2 C10.5,20.5 16,18 18.5,15.5 C20.5,13.8 22,12 22.6,10.3z" fill="#fff"/><path d="M26.5,17.4 C28.5,21 28.6,25 27.6,28 L24.2,28 C26.5,25 27.2,21 26.5,17.4z" fill="#fff"/></svg></div><div class="abs" style="left:36px;top:0;font-size:14px;line-height:28px;color:#fff;white-space:nowrap">0.269718s</div></div><div class="abs" style="left:1813px;top:882px;width:107px;height:28px;background:#222;z-index:8;border-top-left-radius:4px;overflow:hidden"><div class="abs" style="left:0;top:0;width:30px;height:28px;background:#6cb33e;border-top-left-radius:4px;overflow:hidden"><svg width="30" height="28" viewBox="0 0 30 28"><path d="M0 0h30L15 13z" fill="#86c35c"/><path d="M16.5,4 C18.5,7 18.5,12 16.7,14.6 C15,16.5 8,19 5.8,21.6 L4,24.4 C2,22.5 1.8,18.5 3,16.7 C5,14 12,12 13.9,9.3 C15.5,7.5 16.3,5.5 16.5,4z" fill="#fff"/><path d="M22.6,10.3 C24,13 24.2,18 21.6,20.9 C19,23 14.5,24 11.8,27.5 L7.5,27.5 C6.8,25.5 7,24.5 8,23.2 C10.5,20.5 16,18 18.5,15.5 C20.5,13.8 22,12 22.6,10.3z" fill="#fff"/><path d="M26.5,17.4 C28.5,21 28.6,25 27.6,28 L24.2,28 C26.5,25 27.2,21 26.5,17.4z" fill="#fff"/></svg></div><div class="abs" style="left:36px;top:0;font-size:14px;line-height:28px;color:#fff;white-space:nowrap">0.123393s</div></div><svg class="abs" width="1920" height="911" style="left:0;top:0;z-index:9;pointer-events:none" font-family="Liberation Sans, sans-serif"><text transform="translate(40,67) rotate(-19.5)" font-size="16.5" fill="rgba(135,135,135,0.13)">Id:12026-02-26gadmin</text><text transform="translate(390,67) rotate(-19.5)" font-size="16.5" fill="rgba(135,135,135,0.13)">Id:12026-02-26gadmin</text><text transform="translate(740,67) rotate(-19.5)" font-size="16.5" fill="rgba(135,135,135,0.13)">Id:12026-02-26gadmin</text><text transform="translate(1090,67) rotate(-19.5)" font-size="16.5" fill="rgba(135,135,135,0.13)">Id:12026-02-26gadmin</text><text transform="translate(1440,67) rotate(-19.5)" font-size="16.5" fill="rgba(135,135,135,0.13)">Id:12026-02-26gadmin</text><text transform="translate(40,197) rotate(-19.5)" font-size="16.5" fill="rgba(135,135,135,0.13)">Id:12026-02-26gadmin</text><text transform="translate(390,197) rotate(-19.5)" font-size="16.5" fill="rgba(135,135,135,0.13)">Id:12026-02-26gadmin</text><text transform="translate(740,197) rotate(-19.5)" font-size="16.5" fill="rgba(135,135,135,0.13)">Id:12026-02-26gadmin</text><text transform="translate(1090,197) rotate(-19.5)" font-size="16.5" fill="rgba(135,135,135,0.13)">Id:12026-02-26gadmin</text><text transform="translate(1440,197) rotate(-19.5)" font-size="16.5" fill="rgba(135,135,135,0.13)">Id:12026-02-26gadmin</text><text transform="translate(40,327) rotate(-19.5)" font-size="16.5" fill="rgba(135,135,135,0.13)">Id:12026-02-26gadmin</text><text transform="translate(390,327) rotate(-19.5)" font-size="16.5" fill="rgba(135,135,135,0.13)">Id:12026-02-26gadmin</text><text transform="translate(740,327) rotate(-19.5)" font-size="16.5" fill="rgba(135,135,135,0.13)">Id:12026-02-26gadmin</text><text transform="translate(1090,327) rotate(-19.5)" font-size="16.5" fill="rgba(135,135,135,0.13)">Id:12026-02-26gadmin</text><text transform="translate(1440,327) rotate(-19.5)" font-size="16.5" fill="rgba(135,135,135,0.13)">Id:12026-02-26gadmin</text><text transform="translate(40,457) rotate(-19.5)" font-size="16.5" fill="rgba(135,135,135,0.13)">Id:12026-02-26gadmin</text><text transform="translate(390,457) rotate(-19.5)" font-size="16.5" fill="rgba(135,135,135,0.13)">Id:12026-02-26gadmin</text><text transform="translate(740,457) rotate(-19.5)" font-size="16.5" fill="rgba(135,135,135,0.13)">Id:12026-02-26gadmin</text><text transform="translate(1090,457) rotate(-19.5)" font-size="16.5" fill="rgba(135,135,135,0.13)">Id:12026-02-26gadmin</text><text transform="translate(1440,457) rotate(-19.5)" font-size="16.5" fill="rgba(135,135,135,0.13)">Id:12026-02-26gadmin</text><text transform="translate(40,587) rotate(-19.5)" font-size="16.5" fill="rgba(135,135,135,0.13)">Id:12026-02-26gadmin</text><text transform="translate(390,587) rotate(-19.5)" font-size="16.5" fill="rgba(135,135,135,0.13)">Id:12026-02-26gadmin</text><text transform="translate(740,587) rotate(-19.5)" font-size="16.5" fill="rgba(135,135,135,0.13)">Id:12026-02-26gadmin</text><text transform="translate(1090,587) rotate(-19.5)" font-size="16.5" fill="rgba(135,135,135,0.13)">Id:12026-02-26gadmin</text><text transform="translate(1440,587) rotate(-19.5)" font-size="16.5" fill="rgba(135,135,135,0.13)">Id:12026-02-26gadmin</text></svg></body></html>
